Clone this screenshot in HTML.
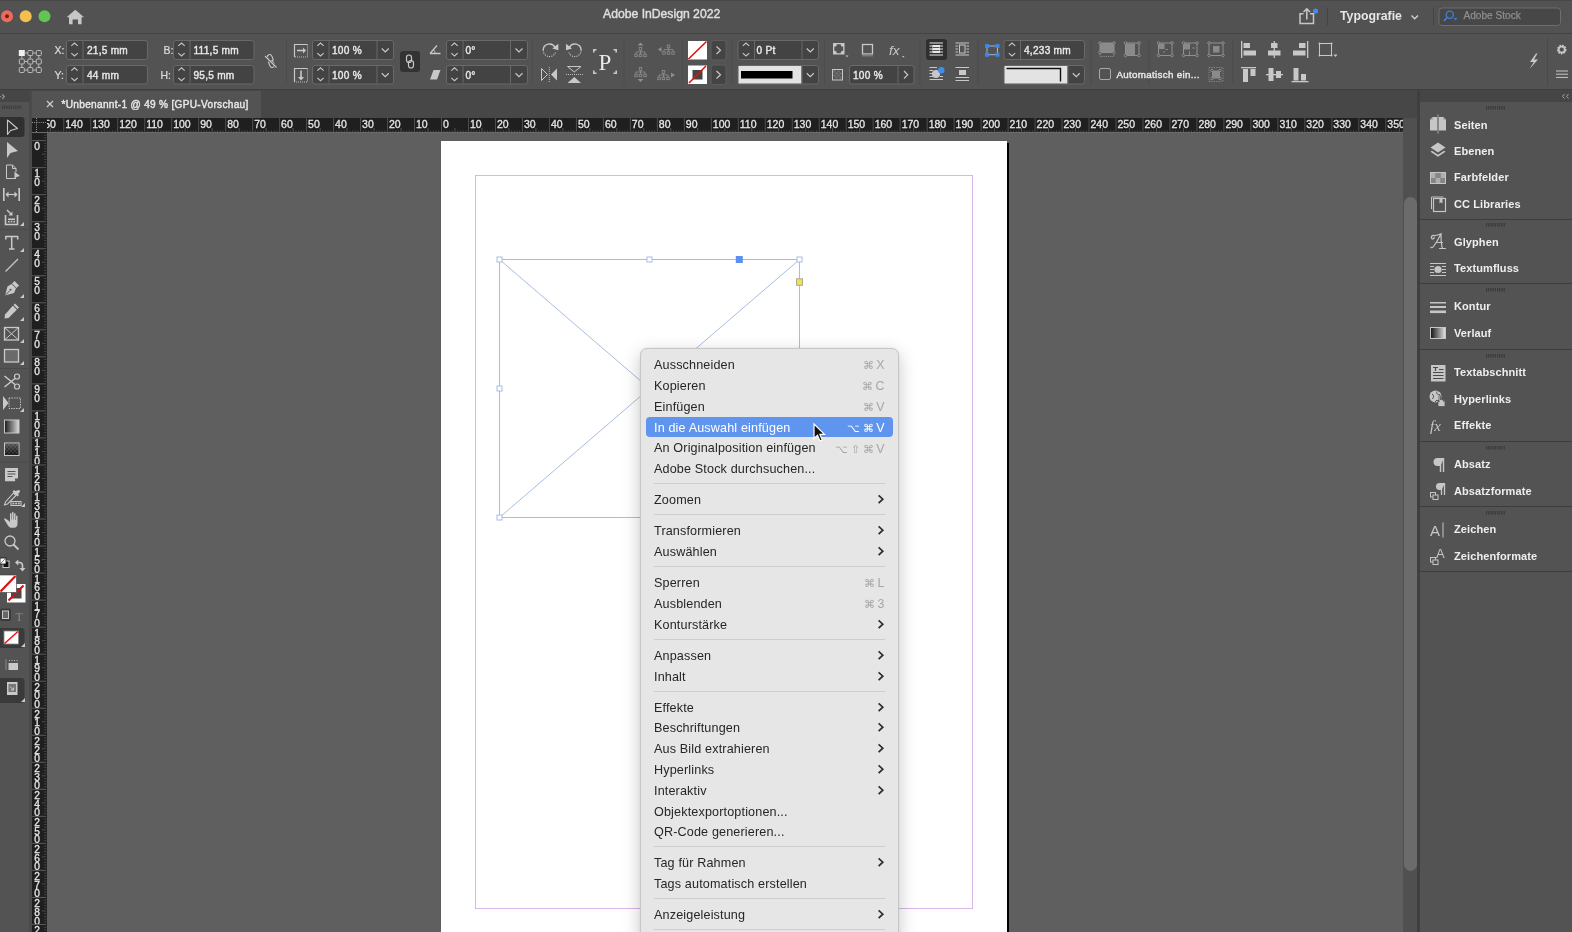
<!DOCTYPE html><html><head><meta charset="utf-8"><style>
*{margin:0;padding:0;box-sizing:border-box}
html,body{width:1572px;height:932px;overflow:hidden;background:#535353;font-family:"Liberation Sans",sans-serif}
body{will-change:transform}
.a{position:absolute}
.t{white-space:pre}
svg{position:absolute;overflow:visible}
</style></head><body><div class="a" style="left:0px;top:0px;width:1572px;height:34px;background:#525252;border-top:1px solid #474747;border-bottom:1px solid #434343"></div><div class="a" style="left:0px;top:34px;width:1572px;height:56px;background:#535353;border-bottom:1px solid #3e3e3e"></div><div class="a" style="left:31px;top:90px;width:1386px;height:28px;background:#474747;"></div><div class="a" style="left:32px;top:91px;width:229px;height:27px;background:#535353;"></div><div class="a" style="left:0px;top:90px;width:32px;height:842px;background:#535353;border-right:3px solid #4a4a4a"></div><div class="a" style="left:0px;top:90px;width:30px;height:12px;background:#464646;"></div><div class="a" style="left:32px;top:118px;width:1371px;height:15px;background:#1f1f1f;"></div><div class="a" style="left:32px;top:132px;width:1371px;height:1px;background:#6a6a6a;"></div><div class="a" style="left:32px;top:133px;width:15px;height:799px;background:#1f1f1f;"></div><div class="a" style="left:47px;top:133px;width:1356px;height:799px;background:#5f5f5f;"></div><div class="a" style="left:1403px;top:118px;width:14px;height:814px;background:#505050;"></div><div class="a" style="left:1404px;top:197px;width:13px;height:674px;background:#6b6b6b;border-radius:7px"></div><div class="a" style="left:1417px;top:90px;width:3px;height:842px;background:#3f3f3f;"></div><div class="a" style="left:1420px;top:90px;width:152px;height:842px;background:#535353;"></div><div class="a" style="left:1420px;top:90px;width:152px;height:12px;background:#454545;"></div><div class="a" style="left:441px;top:141px;width:566px;height:791px;background:#ffffff;"></div><div class="a" style="left:1007px;top:143px;width:2px;height:789px;background:#000000;"></div><div class="a" style="left:475px;top:175px;width:498px;height:734px;background:transparent;border:1px solid #d8b6e8"></div><svg class="a" style="left:0;top:0" width="1572" height="932"><rect x="47.09" y="130.5" width="1" height="1.5" fill="#4c4c4c"/><rect x="49.79" y="128" width="1" height="4" fill="#555"/><rect x="52.49" y="130.5" width="1" height="1.5" fill="#4c4c4c"/><rect x="55.19" y="130.5" width="1" height="1.5" fill="#4c4c4c"/><rect x="57.88" y="130.5" width="1" height="1.5" fill="#4c4c4c"/><rect x="60.58" y="130.5" width="1" height="1.5" fill="#4c4c4c"/><rect x="63.28" y="118" width="1" height="14" fill="#505050"/><rect x="65.98" y="130.5" width="1" height="1.5" fill="#4c4c4c"/><rect x="68.68" y="130.5" width="1" height="1.5" fill="#4c4c4c"/><rect x="71.37" y="130.5" width="1" height="1.5" fill="#4c4c4c"/><rect x="74.07" y="130.5" width="1" height="1.5" fill="#4c4c4c"/><rect x="76.77" y="128" width="1" height="4" fill="#555"/><rect x="79.47" y="130.5" width="1" height="1.5" fill="#4c4c4c"/><rect x="82.17" y="130.5" width="1" height="1.5" fill="#4c4c4c"/><rect x="84.86" y="130.5" width="1" height="1.5" fill="#4c4c4c"/><rect x="87.56" y="130.5" width="1" height="1.5" fill="#4c4c4c"/><rect x="90.26" y="118" width="1" height="14" fill="#505050"/><rect x="92.96" y="130.5" width="1" height="1.5" fill="#4c4c4c"/><rect x="95.66" y="130.5" width="1" height="1.5" fill="#4c4c4c"/><rect x="98.35" y="130.5" width="1" height="1.5" fill="#4c4c4c"/><rect x="101.05" y="130.5" width="1" height="1.5" fill="#4c4c4c"/><rect x="103.75" y="128" width="1" height="4" fill="#555"/><rect x="106.45" y="130.5" width="1" height="1.5" fill="#4c4c4c"/><rect x="109.15" y="130.5" width="1" height="1.5" fill="#4c4c4c"/><rect x="111.84" y="130.5" width="1" height="1.5" fill="#4c4c4c"/><rect x="114.54" y="130.5" width="1" height="1.5" fill="#4c4c4c"/><rect x="117.24" y="118" width="1" height="14" fill="#505050"/><rect x="119.94" y="130.5" width="1" height="1.5" fill="#4c4c4c"/><rect x="122.64" y="130.5" width="1" height="1.5" fill="#4c4c4c"/><rect x="125.33" y="130.5" width="1" height="1.5" fill="#4c4c4c"/><rect x="128.03" y="130.5" width="1" height="1.5" fill="#4c4c4c"/><rect x="130.73" y="128" width="1" height="4" fill="#555"/><rect x="133.43" y="130.5" width="1" height="1.5" fill="#4c4c4c"/><rect x="136.13" y="130.5" width="1" height="1.5" fill="#4c4c4c"/><rect x="138.82" y="130.5" width="1" height="1.5" fill="#4c4c4c"/><rect x="141.52" y="130.5" width="1" height="1.5" fill="#4c4c4c"/><rect x="144.22" y="118" width="1" height="14" fill="#505050"/><rect x="146.92" y="130.5" width="1" height="1.5" fill="#4c4c4c"/><rect x="149.62" y="130.5" width="1" height="1.5" fill="#4c4c4c"/><rect x="152.31" y="130.5" width="1" height="1.5" fill="#4c4c4c"/><rect x="155.01" y="130.5" width="1" height="1.5" fill="#4c4c4c"/><rect x="157.71" y="128" width="1" height="4" fill="#555"/><rect x="160.41" y="130.5" width="1" height="1.5" fill="#4c4c4c"/><rect x="163.11" y="130.5" width="1" height="1.5" fill="#4c4c4c"/><rect x="165.80" y="130.5" width="1" height="1.5" fill="#4c4c4c"/><rect x="168.50" y="130.5" width="1" height="1.5" fill="#4c4c4c"/><rect x="171.20" y="118" width="1" height="14" fill="#505050"/><rect x="173.90" y="130.5" width="1" height="1.5" fill="#4c4c4c"/><rect x="176.60" y="130.5" width="1" height="1.5" fill="#4c4c4c"/><rect x="179.29" y="130.5" width="1" height="1.5" fill="#4c4c4c"/><rect x="181.99" y="130.5" width="1" height="1.5" fill="#4c4c4c"/><rect x="184.69" y="128" width="1" height="4" fill="#555"/><rect x="187.39" y="130.5" width="1" height="1.5" fill="#4c4c4c"/><rect x="190.09" y="130.5" width="1" height="1.5" fill="#4c4c4c"/><rect x="192.78" y="130.5" width="1" height="1.5" fill="#4c4c4c"/><rect x="195.48" y="130.5" width="1" height="1.5" fill="#4c4c4c"/><rect x="198.18" y="118" width="1" height="14" fill="#505050"/><rect x="200.88" y="130.5" width="1" height="1.5" fill="#4c4c4c"/><rect x="203.58" y="130.5" width="1" height="1.5" fill="#4c4c4c"/><rect x="206.27" y="130.5" width="1" height="1.5" fill="#4c4c4c"/><rect x="208.97" y="130.5" width="1" height="1.5" fill="#4c4c4c"/><rect x="211.67" y="128" width="1" height="4" fill="#555"/><rect x="214.37" y="130.5" width="1" height="1.5" fill="#4c4c4c"/><rect x="217.07" y="130.5" width="1" height="1.5" fill="#4c4c4c"/><rect x="219.76" y="130.5" width="1" height="1.5" fill="#4c4c4c"/><rect x="222.46" y="130.5" width="1" height="1.5" fill="#4c4c4c"/><rect x="225.16" y="118" width="1" height="14" fill="#505050"/><rect x="227.86" y="130.5" width="1" height="1.5" fill="#4c4c4c"/><rect x="230.56" y="130.5" width="1" height="1.5" fill="#4c4c4c"/><rect x="233.25" y="130.5" width="1" height="1.5" fill="#4c4c4c"/><rect x="235.95" y="130.5" width="1" height="1.5" fill="#4c4c4c"/><rect x="238.65" y="128" width="1" height="4" fill="#555"/><rect x="241.35" y="130.5" width="1" height="1.5" fill="#4c4c4c"/><rect x="244.05" y="130.5" width="1" height="1.5" fill="#4c4c4c"/><rect x="246.74" y="130.5" width="1" height="1.5" fill="#4c4c4c"/><rect x="249.44" y="130.5" width="1" height="1.5" fill="#4c4c4c"/><rect x="252.14" y="118" width="1" height="14" fill="#505050"/><rect x="254.84" y="130.5" width="1" height="1.5" fill="#4c4c4c"/><rect x="257.54" y="130.5" width="1" height="1.5" fill="#4c4c4c"/><rect x="260.23" y="130.5" width="1" height="1.5" fill="#4c4c4c"/><rect x="262.93" y="130.5" width="1" height="1.5" fill="#4c4c4c"/><rect x="265.63" y="128" width="1" height="4" fill="#555"/><rect x="268.33" y="130.5" width="1" height="1.5" fill="#4c4c4c"/><rect x="271.03" y="130.5" width="1" height="1.5" fill="#4c4c4c"/><rect x="273.72" y="130.5" width="1" height="1.5" fill="#4c4c4c"/><rect x="276.42" y="130.5" width="1" height="1.5" fill="#4c4c4c"/><rect x="279.12" y="118" width="1" height="14" fill="#505050"/><rect x="281.82" y="130.5" width="1" height="1.5" fill="#4c4c4c"/><rect x="284.52" y="130.5" width="1" height="1.5" fill="#4c4c4c"/><rect x="287.21" y="130.5" width="1" height="1.5" fill="#4c4c4c"/><rect x="289.91" y="130.5" width="1" height="1.5" fill="#4c4c4c"/><rect x="292.61" y="128" width="1" height="4" fill="#555"/><rect x="295.31" y="130.5" width="1" height="1.5" fill="#4c4c4c"/><rect x="298.01" y="130.5" width="1" height="1.5" fill="#4c4c4c"/><rect x="300.70" y="130.5" width="1" height="1.5" fill="#4c4c4c"/><rect x="303.40" y="130.5" width="1" height="1.5" fill="#4c4c4c"/><rect x="306.10" y="118" width="1" height="14" fill="#505050"/><rect x="308.80" y="130.5" width="1" height="1.5" fill="#4c4c4c"/><rect x="311.50" y="130.5" width="1" height="1.5" fill="#4c4c4c"/><rect x="314.19" y="130.5" width="1" height="1.5" fill="#4c4c4c"/><rect x="316.89" y="130.5" width="1" height="1.5" fill="#4c4c4c"/><rect x="319.59" y="128" width="1" height="4" fill="#555"/><rect x="322.29" y="130.5" width="1" height="1.5" fill="#4c4c4c"/><rect x="324.99" y="130.5" width="1" height="1.5" fill="#4c4c4c"/><rect x="327.68" y="130.5" width="1" height="1.5" fill="#4c4c4c"/><rect x="330.38" y="130.5" width="1" height="1.5" fill="#4c4c4c"/><rect x="333.08" y="118" width="1" height="14" fill="#505050"/><rect x="335.78" y="130.5" width="1" height="1.5" fill="#4c4c4c"/><rect x="338.48" y="130.5" width="1" height="1.5" fill="#4c4c4c"/><rect x="341.17" y="130.5" width="1" height="1.5" fill="#4c4c4c"/><rect x="343.87" y="130.5" width="1" height="1.5" fill="#4c4c4c"/><rect x="346.57" y="128" width="1" height="4" fill="#555"/><rect x="349.27" y="130.5" width="1" height="1.5" fill="#4c4c4c"/><rect x="351.97" y="130.5" width="1" height="1.5" fill="#4c4c4c"/><rect x="354.66" y="130.5" width="1" height="1.5" fill="#4c4c4c"/><rect x="357.36" y="130.5" width="1" height="1.5" fill="#4c4c4c"/><rect x="360.06" y="118" width="1" height="14" fill="#505050"/><rect x="362.76" y="130.5" width="1" height="1.5" fill="#4c4c4c"/><rect x="365.46" y="130.5" width="1" height="1.5" fill="#4c4c4c"/><rect x="368.15" y="130.5" width="1" height="1.5" fill="#4c4c4c"/><rect x="370.85" y="130.5" width="1" height="1.5" fill="#4c4c4c"/><rect x="373.55" y="128" width="1" height="4" fill="#555"/><rect x="376.25" y="130.5" width="1" height="1.5" fill="#4c4c4c"/><rect x="378.95" y="130.5" width="1" height="1.5" fill="#4c4c4c"/><rect x="381.64" y="130.5" width="1" height="1.5" fill="#4c4c4c"/><rect x="384.34" y="130.5" width="1" height="1.5" fill="#4c4c4c"/><rect x="387.04" y="118" width="1" height="14" fill="#505050"/><rect x="389.74" y="130.5" width="1" height="1.5" fill="#4c4c4c"/><rect x="392.44" y="130.5" width="1" height="1.5" fill="#4c4c4c"/><rect x="395.13" y="130.5" width="1" height="1.5" fill="#4c4c4c"/><rect x="397.83" y="130.5" width="1" height="1.5" fill="#4c4c4c"/><rect x="400.53" y="128" width="1" height="4" fill="#555"/><rect x="403.23" y="130.5" width="1" height="1.5" fill="#4c4c4c"/><rect x="405.93" y="130.5" width="1" height="1.5" fill="#4c4c4c"/><rect x="408.62" y="130.5" width="1" height="1.5" fill="#4c4c4c"/><rect x="411.32" y="130.5" width="1" height="1.5" fill="#4c4c4c"/><rect x="414.02" y="118" width="1" height="14" fill="#505050"/><rect x="416.72" y="130.5" width="1" height="1.5" fill="#4c4c4c"/><rect x="419.42" y="130.5" width="1" height="1.5" fill="#4c4c4c"/><rect x="422.11" y="130.5" width="1" height="1.5" fill="#4c4c4c"/><rect x="424.81" y="130.5" width="1" height="1.5" fill="#4c4c4c"/><rect x="427.51" y="128" width="1" height="4" fill="#555"/><rect x="430.21" y="130.5" width="1" height="1.5" fill="#4c4c4c"/><rect x="432.91" y="130.5" width="1" height="1.5" fill="#4c4c4c"/><rect x="435.60" y="130.5" width="1" height="1.5" fill="#4c4c4c"/><rect x="438.30" y="130.5" width="1" height="1.5" fill="#4c4c4c"/><rect x="441.00" y="118" width="1" height="14" fill="#505050"/><rect x="443.70" y="130.5" width="1" height="1.5" fill="#4c4c4c"/><rect x="446.40" y="130.5" width="1" height="1.5" fill="#4c4c4c"/><rect x="449.09" y="130.5" width="1" height="1.5" fill="#4c4c4c"/><rect x="451.79" y="130.5" width="1" height="1.5" fill="#4c4c4c"/><rect x="454.49" y="128" width="1" height="4" fill="#555"/><rect x="457.19" y="130.5" width="1" height="1.5" fill="#4c4c4c"/><rect x="459.89" y="130.5" width="1" height="1.5" fill="#4c4c4c"/><rect x="462.58" y="130.5" width="1" height="1.5" fill="#4c4c4c"/><rect x="465.28" y="130.5" width="1" height="1.5" fill="#4c4c4c"/><rect x="467.98" y="118" width="1" height="14" fill="#505050"/><rect x="470.68" y="130.5" width="1" height="1.5" fill="#4c4c4c"/><rect x="473.38" y="130.5" width="1" height="1.5" fill="#4c4c4c"/><rect x="476.07" y="130.5" width="1" height="1.5" fill="#4c4c4c"/><rect x="478.77" y="130.5" width="1" height="1.5" fill="#4c4c4c"/><rect x="481.47" y="128" width="1" height="4" fill="#555"/><rect x="484.17" y="130.5" width="1" height="1.5" fill="#4c4c4c"/><rect x="486.87" y="130.5" width="1" height="1.5" fill="#4c4c4c"/><rect x="489.56" y="130.5" width="1" height="1.5" fill="#4c4c4c"/><rect x="492.26" y="130.5" width="1" height="1.5" fill="#4c4c4c"/><rect x="494.96" y="118" width="1" height="14" fill="#505050"/><rect x="497.66" y="130.5" width="1" height="1.5" fill="#4c4c4c"/><rect x="500.36" y="130.5" width="1" height="1.5" fill="#4c4c4c"/><rect x="503.05" y="130.5" width="1" height="1.5" fill="#4c4c4c"/><rect x="505.75" y="130.5" width="1" height="1.5" fill="#4c4c4c"/><rect x="508.45" y="128" width="1" height="4" fill="#555"/><rect x="511.15" y="130.5" width="1" height="1.5" fill="#4c4c4c"/><rect x="513.85" y="130.5" width="1" height="1.5" fill="#4c4c4c"/><rect x="516.54" y="130.5" width="1" height="1.5" fill="#4c4c4c"/><rect x="519.24" y="130.5" width="1" height="1.5" fill="#4c4c4c"/><rect x="521.94" y="118" width="1" height="14" fill="#505050"/><rect x="524.64" y="130.5" width="1" height="1.5" fill="#4c4c4c"/><rect x="527.34" y="130.5" width="1" height="1.5" fill="#4c4c4c"/><rect x="530.03" y="130.5" width="1" height="1.5" fill="#4c4c4c"/><rect x="532.73" y="130.5" width="1" height="1.5" fill="#4c4c4c"/><rect x="535.43" y="128" width="1" height="4" fill="#555"/><rect x="538.13" y="130.5" width="1" height="1.5" fill="#4c4c4c"/><rect x="540.83" y="130.5" width="1" height="1.5" fill="#4c4c4c"/><rect x="543.52" y="130.5" width="1" height="1.5" fill="#4c4c4c"/><rect x="546.22" y="130.5" width="1" height="1.5" fill="#4c4c4c"/><rect x="548.92" y="118" width="1" height="14" fill="#505050"/><rect x="551.62" y="130.5" width="1" height="1.5" fill="#4c4c4c"/><rect x="554.32" y="130.5" width="1" height="1.5" fill="#4c4c4c"/><rect x="557.01" y="130.5" width="1" height="1.5" fill="#4c4c4c"/><rect x="559.71" y="130.5" width="1" height="1.5" fill="#4c4c4c"/><rect x="562.41" y="128" width="1" height="4" fill="#555"/><rect x="565.11" y="130.5" width="1" height="1.5" fill="#4c4c4c"/><rect x="567.81" y="130.5" width="1" height="1.5" fill="#4c4c4c"/><rect x="570.50" y="130.5" width="1" height="1.5" fill="#4c4c4c"/><rect x="573.20" y="130.5" width="1" height="1.5" fill="#4c4c4c"/><rect x="575.90" y="118" width="1" height="14" fill="#505050"/><rect x="578.60" y="130.5" width="1" height="1.5" fill="#4c4c4c"/><rect x="581.30" y="130.5" width="1" height="1.5" fill="#4c4c4c"/><rect x="583.99" y="130.5" width="1" height="1.5" fill="#4c4c4c"/><rect x="586.69" y="130.5" width="1" height="1.5" fill="#4c4c4c"/><rect x="589.39" y="128" width="1" height="4" fill="#555"/><rect x="592.09" y="130.5" width="1" height="1.5" fill="#4c4c4c"/><rect x="594.79" y="130.5" width="1" height="1.5" fill="#4c4c4c"/><rect x="597.48" y="130.5" width="1" height="1.5" fill="#4c4c4c"/><rect x="600.18" y="130.5" width="1" height="1.5" fill="#4c4c4c"/><rect x="602.88" y="118" width="1" height="14" fill="#505050"/><rect x="605.58" y="130.5" width="1" height="1.5" fill="#4c4c4c"/><rect x="608.28" y="130.5" width="1" height="1.5" fill="#4c4c4c"/><rect x="610.97" y="130.5" width="1" height="1.5" fill="#4c4c4c"/><rect x="613.67" y="130.5" width="1" height="1.5" fill="#4c4c4c"/><rect x="616.37" y="128" width="1" height="4" fill="#555"/><rect x="619.07" y="130.5" width="1" height="1.5" fill="#4c4c4c"/><rect x="621.77" y="130.5" width="1" height="1.5" fill="#4c4c4c"/><rect x="624.46" y="130.5" width="1" height="1.5" fill="#4c4c4c"/><rect x="627.16" y="130.5" width="1" height="1.5" fill="#4c4c4c"/><rect x="629.86" y="118" width="1" height="14" fill="#505050"/><rect x="632.56" y="130.5" width="1" height="1.5" fill="#4c4c4c"/><rect x="635.26" y="130.5" width="1" height="1.5" fill="#4c4c4c"/><rect x="637.95" y="130.5" width="1" height="1.5" fill="#4c4c4c"/><rect x="640.65" y="130.5" width="1" height="1.5" fill="#4c4c4c"/><rect x="643.35" y="128" width="1" height="4" fill="#555"/><rect x="646.05" y="130.5" width="1" height="1.5" fill="#4c4c4c"/><rect x="648.75" y="130.5" width="1" height="1.5" fill="#4c4c4c"/><rect x="651.44" y="130.5" width="1" height="1.5" fill="#4c4c4c"/><rect x="654.14" y="130.5" width="1" height="1.5" fill="#4c4c4c"/><rect x="656.84" y="118" width="1" height="14" fill="#505050"/><rect x="659.54" y="130.5" width="1" height="1.5" fill="#4c4c4c"/><rect x="662.24" y="130.5" width="1" height="1.5" fill="#4c4c4c"/><rect x="664.93" y="130.5" width="1" height="1.5" fill="#4c4c4c"/><rect x="667.63" y="130.5" width="1" height="1.5" fill="#4c4c4c"/><rect x="670.33" y="128" width="1" height="4" fill="#555"/><rect x="673.03" y="130.5" width="1" height="1.5" fill="#4c4c4c"/><rect x="675.73" y="130.5" width="1" height="1.5" fill="#4c4c4c"/><rect x="678.42" y="130.5" width="1" height="1.5" fill="#4c4c4c"/><rect x="681.12" y="130.5" width="1" height="1.5" fill="#4c4c4c"/><rect x="683.82" y="118" width="1" height="14" fill="#505050"/><rect x="686.52" y="130.5" width="1" height="1.5" fill="#4c4c4c"/><rect x="689.22" y="130.5" width="1" height="1.5" fill="#4c4c4c"/><rect x="691.91" y="130.5" width="1" height="1.5" fill="#4c4c4c"/><rect x="694.61" y="130.5" width="1" height="1.5" fill="#4c4c4c"/><rect x="697.31" y="128" width="1" height="4" fill="#555"/><rect x="700.01" y="130.5" width="1" height="1.5" fill="#4c4c4c"/><rect x="702.71" y="130.5" width="1" height="1.5" fill="#4c4c4c"/><rect x="705.40" y="130.5" width="1" height="1.5" fill="#4c4c4c"/><rect x="708.10" y="130.5" width="1" height="1.5" fill="#4c4c4c"/><rect x="710.80" y="118" width="1" height="14" fill="#505050"/><rect x="713.50" y="130.5" width="1" height="1.5" fill="#4c4c4c"/><rect x="716.20" y="130.5" width="1" height="1.5" fill="#4c4c4c"/><rect x="718.89" y="130.5" width="1" height="1.5" fill="#4c4c4c"/><rect x="721.59" y="130.5" width="1" height="1.5" fill="#4c4c4c"/><rect x="724.29" y="128" width="1" height="4" fill="#555"/><rect x="726.99" y="130.5" width="1" height="1.5" fill="#4c4c4c"/><rect x="729.69" y="130.5" width="1" height="1.5" fill="#4c4c4c"/><rect x="732.38" y="130.5" width="1" height="1.5" fill="#4c4c4c"/><rect x="735.08" y="130.5" width="1" height="1.5" fill="#4c4c4c"/><rect x="737.78" y="118" width="1" height="14" fill="#505050"/><rect x="740.48" y="130.5" width="1" height="1.5" fill="#4c4c4c"/><rect x="743.18" y="130.5" width="1" height="1.5" fill="#4c4c4c"/><rect x="745.87" y="130.5" width="1" height="1.5" fill="#4c4c4c"/><rect x="748.57" y="130.5" width="1" height="1.5" fill="#4c4c4c"/><rect x="751.27" y="128" width="1" height="4" fill="#555"/><rect x="753.97" y="130.5" width="1" height="1.5" fill="#4c4c4c"/><rect x="756.67" y="130.5" width="1" height="1.5" fill="#4c4c4c"/><rect x="759.36" y="130.5" width="1" height="1.5" fill="#4c4c4c"/><rect x="762.06" y="130.5" width="1" height="1.5" fill="#4c4c4c"/><rect x="764.76" y="118" width="1" height="14" fill="#505050"/><rect x="767.46" y="130.5" width="1" height="1.5" fill="#4c4c4c"/><rect x="770.16" y="130.5" width="1" height="1.5" fill="#4c4c4c"/><rect x="772.85" y="130.5" width="1" height="1.5" fill="#4c4c4c"/><rect x="775.55" y="130.5" width="1" height="1.5" fill="#4c4c4c"/><rect x="778.25" y="128" width="1" height="4" fill="#555"/><rect x="780.95" y="130.5" width="1" height="1.5" fill="#4c4c4c"/><rect x="783.65" y="130.5" width="1" height="1.5" fill="#4c4c4c"/><rect x="786.34" y="130.5" width="1" height="1.5" fill="#4c4c4c"/><rect x="789.04" y="130.5" width="1" height="1.5" fill="#4c4c4c"/><rect x="791.74" y="118" width="1" height="14" fill="#505050"/><rect x="794.44" y="130.5" width="1" height="1.5" fill="#4c4c4c"/><rect x="797.14" y="130.5" width="1" height="1.5" fill="#4c4c4c"/><rect x="799.83" y="130.5" width="1" height="1.5" fill="#4c4c4c"/><rect x="802.53" y="130.5" width="1" height="1.5" fill="#4c4c4c"/><rect x="805.23" y="128" width="1" height="4" fill="#555"/><rect x="807.93" y="130.5" width="1" height="1.5" fill="#4c4c4c"/><rect x="810.63" y="130.5" width="1" height="1.5" fill="#4c4c4c"/><rect x="813.32" y="130.5" width="1" height="1.5" fill="#4c4c4c"/><rect x="816.02" y="130.5" width="1" height="1.5" fill="#4c4c4c"/><rect x="818.72" y="118" width="1" height="14" fill="#505050"/><rect x="821.42" y="130.5" width="1" height="1.5" fill="#4c4c4c"/><rect x="824.12" y="130.5" width="1" height="1.5" fill="#4c4c4c"/><rect x="826.81" y="130.5" width="1" height="1.5" fill="#4c4c4c"/><rect x="829.51" y="130.5" width="1" height="1.5" fill="#4c4c4c"/><rect x="832.21" y="128" width="1" height="4" fill="#555"/><rect x="834.91" y="130.5" width="1" height="1.5" fill="#4c4c4c"/><rect x="837.61" y="130.5" width="1" height="1.5" fill="#4c4c4c"/><rect x="840.30" y="130.5" width="1" height="1.5" fill="#4c4c4c"/><rect x="843.00" y="130.5" width="1" height="1.5" fill="#4c4c4c"/><rect x="845.70" y="118" width="1" height="14" fill="#505050"/><rect x="848.40" y="130.5" width="1" height="1.5" fill="#4c4c4c"/><rect x="851.10" y="130.5" width="1" height="1.5" fill="#4c4c4c"/><rect x="853.79" y="130.5" width="1" height="1.5" fill="#4c4c4c"/><rect x="856.49" y="130.5" width="1" height="1.5" fill="#4c4c4c"/><rect x="859.19" y="128" width="1" height="4" fill="#555"/><rect x="861.89" y="130.5" width="1" height="1.5" fill="#4c4c4c"/><rect x="864.59" y="130.5" width="1" height="1.5" fill="#4c4c4c"/><rect x="867.28" y="130.5" width="1" height="1.5" fill="#4c4c4c"/><rect x="869.98" y="130.5" width="1" height="1.5" fill="#4c4c4c"/><rect x="872.68" y="118" width="1" height="14" fill="#505050"/><rect x="875.38" y="130.5" width="1" height="1.5" fill="#4c4c4c"/><rect x="878.08" y="130.5" width="1" height="1.5" fill="#4c4c4c"/><rect x="880.77" y="130.5" width="1" height="1.5" fill="#4c4c4c"/><rect x="883.47" y="130.5" width="1" height="1.5" fill="#4c4c4c"/><rect x="886.17" y="128" width="1" height="4" fill="#555"/><rect x="888.87" y="130.5" width="1" height="1.5" fill="#4c4c4c"/><rect x="891.57" y="130.5" width="1" height="1.5" fill="#4c4c4c"/><rect x="894.26" y="130.5" width="1" height="1.5" fill="#4c4c4c"/><rect x="896.96" y="130.5" width="1" height="1.5" fill="#4c4c4c"/><rect x="899.66" y="118" width="1" height="14" fill="#505050"/><rect x="902.36" y="130.5" width="1" height="1.5" fill="#4c4c4c"/><rect x="905.06" y="130.5" width="1" height="1.5" fill="#4c4c4c"/><rect x="907.75" y="130.5" width="1" height="1.5" fill="#4c4c4c"/><rect x="910.45" y="130.5" width="1" height="1.5" fill="#4c4c4c"/><rect x="913.15" y="128" width="1" height="4" fill="#555"/><rect x="915.85" y="130.5" width="1" height="1.5" fill="#4c4c4c"/><rect x="918.55" y="130.5" width="1" height="1.5" fill="#4c4c4c"/><rect x="921.24" y="130.5" width="1" height="1.5" fill="#4c4c4c"/><rect x="923.94" y="130.5" width="1" height="1.5" fill="#4c4c4c"/><rect x="926.64" y="118" width="1" height="14" fill="#505050"/><rect x="929.34" y="130.5" width="1" height="1.5" fill="#4c4c4c"/><rect x="932.04" y="130.5" width="1" height="1.5" fill="#4c4c4c"/><rect x="934.73" y="130.5" width="1" height="1.5" fill="#4c4c4c"/><rect x="937.43" y="130.5" width="1" height="1.5" fill="#4c4c4c"/><rect x="940.13" y="128" width="1" height="4" fill="#555"/><rect x="942.83" y="130.5" width="1" height="1.5" fill="#4c4c4c"/><rect x="945.53" y="130.5" width="1" height="1.5" fill="#4c4c4c"/><rect x="948.22" y="130.5" width="1" height="1.5" fill="#4c4c4c"/><rect x="950.92" y="130.5" width="1" height="1.5" fill="#4c4c4c"/><rect x="953.62" y="118" width="1" height="14" fill="#505050"/><rect x="956.32" y="130.5" width="1" height="1.5" fill="#4c4c4c"/><rect x="959.02" y="130.5" width="1" height="1.5" fill="#4c4c4c"/><rect x="961.71" y="130.5" width="1" height="1.5" fill="#4c4c4c"/><rect x="964.41" y="130.5" width="1" height="1.5" fill="#4c4c4c"/><rect x="967.11" y="128" width="1" height="4" fill="#555"/><rect x="969.81" y="130.5" width="1" height="1.5" fill="#4c4c4c"/><rect x="972.51" y="130.5" width="1" height="1.5" fill="#4c4c4c"/><rect x="975.20" y="130.5" width="1" height="1.5" fill="#4c4c4c"/><rect x="977.90" y="130.5" width="1" height="1.5" fill="#4c4c4c"/><rect x="980.60" y="118" width="1" height="14" fill="#505050"/><rect x="983.30" y="130.5" width="1" height="1.5" fill="#4c4c4c"/><rect x="986.00" y="130.5" width="1" height="1.5" fill="#4c4c4c"/><rect x="988.69" y="130.5" width="1" height="1.5" fill="#4c4c4c"/><rect x="991.39" y="130.5" width="1" height="1.5" fill="#4c4c4c"/><rect x="994.09" y="128" width="1" height="4" fill="#555"/><rect x="996.79" y="130.5" width="1" height="1.5" fill="#4c4c4c"/><rect x="999.49" y="130.5" width="1" height="1.5" fill="#4c4c4c"/><rect x="1002.18" y="130.5" width="1" height="1.5" fill="#4c4c4c"/><rect x="1004.88" y="130.5" width="1" height="1.5" fill="#4c4c4c"/><rect x="1007.58" y="118" width="1" height="14" fill="#505050"/><rect x="1010.28" y="130.5" width="1" height="1.5" fill="#4c4c4c"/><rect x="1012.98" y="130.5" width="1" height="1.5" fill="#4c4c4c"/><rect x="1015.67" y="130.5" width="1" height="1.5" fill="#4c4c4c"/><rect x="1018.37" y="130.5" width="1" height="1.5" fill="#4c4c4c"/><rect x="1021.07" y="128" width="1" height="4" fill="#555"/><rect x="1023.77" y="130.5" width="1" height="1.5" fill="#4c4c4c"/><rect x="1026.47" y="130.5" width="1" height="1.5" fill="#4c4c4c"/><rect x="1029.16" y="130.5" width="1" height="1.5" fill="#4c4c4c"/><rect x="1031.86" y="130.5" width="1" height="1.5" fill="#4c4c4c"/><rect x="1034.56" y="118" width="1" height="14" fill="#505050"/><rect x="1037.26" y="130.5" width="1" height="1.5" fill="#4c4c4c"/><rect x="1039.96" y="130.5" width="1" height="1.5" fill="#4c4c4c"/><rect x="1042.65" y="130.5" width="1" height="1.5" fill="#4c4c4c"/><rect x="1045.35" y="130.5" width="1" height="1.5" fill="#4c4c4c"/><rect x="1048.05" y="128" width="1" height="4" fill="#555"/><rect x="1050.75" y="130.5" width="1" height="1.5" fill="#4c4c4c"/><rect x="1053.45" y="130.5" width="1" height="1.5" fill="#4c4c4c"/><rect x="1056.14" y="130.5" width="1" height="1.5" fill="#4c4c4c"/><rect x="1058.84" y="130.5" width="1" height="1.5" fill="#4c4c4c"/><rect x="1061.54" y="118" width="1" height="14" fill="#505050"/><rect x="1064.24" y="130.5" width="1" height="1.5" fill="#4c4c4c"/><rect x="1066.94" y="130.5" width="1" height="1.5" fill="#4c4c4c"/><rect x="1069.63" y="130.5" width="1" height="1.5" fill="#4c4c4c"/><rect x="1072.33" y="130.5" width="1" height="1.5" fill="#4c4c4c"/><rect x="1075.03" y="128" width="1" height="4" fill="#555"/><rect x="1077.73" y="130.5" width="1" height="1.5" fill="#4c4c4c"/><rect x="1080.43" y="130.5" width="1" height="1.5" fill="#4c4c4c"/><rect x="1083.12" y="130.5" width="1" height="1.5" fill="#4c4c4c"/><rect x="1085.82" y="130.5" width="1" height="1.5" fill="#4c4c4c"/><rect x="1088.52" y="118" width="1" height="14" fill="#505050"/><rect x="1091.22" y="130.5" width="1" height="1.5" fill="#4c4c4c"/><rect x="1093.92" y="130.5" width="1" height="1.5" fill="#4c4c4c"/><rect x="1096.61" y="130.5" width="1" height="1.5" fill="#4c4c4c"/><rect x="1099.31" y="130.5" width="1" height="1.5" fill="#4c4c4c"/><rect x="1102.01" y="128" width="1" height="4" fill="#555"/><rect x="1104.71" y="130.5" width="1" height="1.5" fill="#4c4c4c"/><rect x="1107.41" y="130.5" width="1" height="1.5" fill="#4c4c4c"/><rect x="1110.10" y="130.5" width="1" height="1.5" fill="#4c4c4c"/><rect x="1112.80" y="130.5" width="1" height="1.5" fill="#4c4c4c"/><rect x="1115.50" y="118" width="1" height="14" fill="#505050"/><rect x="1118.20" y="130.5" width="1" height="1.5" fill="#4c4c4c"/><rect x="1120.90" y="130.5" width="1" height="1.5" fill="#4c4c4c"/><rect x="1123.59" y="130.5" width="1" height="1.5" fill="#4c4c4c"/><rect x="1126.29" y="130.5" width="1" height="1.5" fill="#4c4c4c"/><rect x="1128.99" y="128" width="1" height="4" fill="#555"/><rect x="1131.69" y="130.5" width="1" height="1.5" fill="#4c4c4c"/><rect x="1134.39" y="130.5" width="1" height="1.5" fill="#4c4c4c"/><rect x="1137.08" y="130.5" width="1" height="1.5" fill="#4c4c4c"/><rect x="1139.78" y="130.5" width="1" height="1.5" fill="#4c4c4c"/><rect x="1142.48" y="118" width="1" height="14" fill="#505050"/><rect x="1145.18" y="130.5" width="1" height="1.5" fill="#4c4c4c"/><rect x="1147.88" y="130.5" width="1" height="1.5" fill="#4c4c4c"/><rect x="1150.57" y="130.5" width="1" height="1.5" fill="#4c4c4c"/><rect x="1153.27" y="130.5" width="1" height="1.5" fill="#4c4c4c"/><rect x="1155.97" y="128" width="1" height="4" fill="#555"/><rect x="1158.67" y="130.5" width="1" height="1.5" fill="#4c4c4c"/><rect x="1161.37" y="130.5" width="1" height="1.5" fill="#4c4c4c"/><rect x="1164.06" y="130.5" width="1" height="1.5" fill="#4c4c4c"/><rect x="1166.76" y="130.5" width="1" height="1.5" fill="#4c4c4c"/><rect x="1169.46" y="118" width="1" height="14" fill="#505050"/><rect x="1172.16" y="130.5" width="1" height="1.5" fill="#4c4c4c"/><rect x="1174.86" y="130.5" width="1" height="1.5" fill="#4c4c4c"/><rect x="1177.55" y="130.5" width="1" height="1.5" fill="#4c4c4c"/><rect x="1180.25" y="130.5" width="1" height="1.5" fill="#4c4c4c"/><rect x="1182.95" y="128" width="1" height="4" fill="#555"/><rect x="1185.65" y="130.5" width="1" height="1.5" fill="#4c4c4c"/><rect x="1188.35" y="130.5" width="1" height="1.5" fill="#4c4c4c"/><rect x="1191.04" y="130.5" width="1" height="1.5" fill="#4c4c4c"/><rect x="1193.74" y="130.5" width="1" height="1.5" fill="#4c4c4c"/><rect x="1196.44" y="118" width="1" height="14" fill="#505050"/><rect x="1199.14" y="130.5" width="1" height="1.5" fill="#4c4c4c"/><rect x="1201.84" y="130.5" width="1" height="1.5" fill="#4c4c4c"/><rect x="1204.53" y="130.5" width="1" height="1.5" fill="#4c4c4c"/><rect x="1207.23" y="130.5" width="1" height="1.5" fill="#4c4c4c"/><rect x="1209.93" y="128" width="1" height="4" fill="#555"/><rect x="1212.63" y="130.5" width="1" height="1.5" fill="#4c4c4c"/><rect x="1215.33" y="130.5" width="1" height="1.5" fill="#4c4c4c"/><rect x="1218.02" y="130.5" width="1" height="1.5" fill="#4c4c4c"/><rect x="1220.72" y="130.5" width="1" height="1.5" fill="#4c4c4c"/><rect x="1223.42" y="118" width="1" height="14" fill="#505050"/><rect x="1226.12" y="130.5" width="1" height="1.5" fill="#4c4c4c"/><rect x="1228.82" y="130.5" width="1" height="1.5" fill="#4c4c4c"/><rect x="1231.51" y="130.5" width="1" height="1.5" fill="#4c4c4c"/><rect x="1234.21" y="130.5" width="1" height="1.5" fill="#4c4c4c"/><rect x="1236.91" y="128" width="1" height="4" fill="#555"/><rect x="1239.61" y="130.5" width="1" height="1.5" fill="#4c4c4c"/><rect x="1242.31" y="130.5" width="1" height="1.5" fill="#4c4c4c"/><rect x="1245.00" y="130.5" width="1" height="1.5" fill="#4c4c4c"/><rect x="1247.70" y="130.5" width="1" height="1.5" fill="#4c4c4c"/><rect x="1250.40" y="118" width="1" height="14" fill="#505050"/><rect x="1253.10" y="130.5" width="1" height="1.5" fill="#4c4c4c"/><rect x="1255.80" y="130.5" width="1" height="1.5" fill="#4c4c4c"/><rect x="1258.49" y="130.5" width="1" height="1.5" fill="#4c4c4c"/><rect x="1261.19" y="130.5" width="1" height="1.5" fill="#4c4c4c"/><rect x="1263.89" y="128" width="1" height="4" fill="#555"/><rect x="1266.59" y="130.5" width="1" height="1.5" fill="#4c4c4c"/><rect x="1269.29" y="130.5" width="1" height="1.5" fill="#4c4c4c"/><rect x="1271.98" y="130.5" width="1" height="1.5" fill="#4c4c4c"/><rect x="1274.68" y="130.5" width="1" height="1.5" fill="#4c4c4c"/><rect x="1277.38" y="118" width="1" height="14" fill="#505050"/><rect x="1280.08" y="130.5" width="1" height="1.5" fill="#4c4c4c"/><rect x="1282.78" y="130.5" width="1" height="1.5" fill="#4c4c4c"/><rect x="1285.47" y="130.5" width="1" height="1.5" fill="#4c4c4c"/><rect x="1288.17" y="130.5" width="1" height="1.5" fill="#4c4c4c"/><rect x="1290.87" y="128" width="1" height="4" fill="#555"/><rect x="1293.57" y="130.5" width="1" height="1.5" fill="#4c4c4c"/><rect x="1296.27" y="130.5" width="1" height="1.5" fill="#4c4c4c"/><rect x="1298.96" y="130.5" width="1" height="1.5" fill="#4c4c4c"/><rect x="1301.66" y="130.5" width="1" height="1.5" fill="#4c4c4c"/><rect x="1304.36" y="118" width="1" height="14" fill="#505050"/><rect x="1307.06" y="130.5" width="1" height="1.5" fill="#4c4c4c"/><rect x="1309.76" y="130.5" width="1" height="1.5" fill="#4c4c4c"/><rect x="1312.45" y="130.5" width="1" height="1.5" fill="#4c4c4c"/><rect x="1315.15" y="130.5" width="1" height="1.5" fill="#4c4c4c"/><rect x="1317.85" y="128" width="1" height="4" fill="#555"/><rect x="1320.55" y="130.5" width="1" height="1.5" fill="#4c4c4c"/><rect x="1323.25" y="130.5" width="1" height="1.5" fill="#4c4c4c"/><rect x="1325.94" y="130.5" width="1" height="1.5" fill="#4c4c4c"/><rect x="1328.64" y="130.5" width="1" height="1.5" fill="#4c4c4c"/><rect x="1331.34" y="118" width="1" height="14" fill="#505050"/><rect x="1334.04" y="130.5" width="1" height="1.5" fill="#4c4c4c"/><rect x="1336.74" y="130.5" width="1" height="1.5" fill="#4c4c4c"/><rect x="1339.43" y="130.5" width="1" height="1.5" fill="#4c4c4c"/><rect x="1342.13" y="130.5" width="1" height="1.5" fill="#4c4c4c"/><rect x="1344.83" y="128" width="1" height="4" fill="#555"/><rect x="1347.53" y="130.5" width="1" height="1.5" fill="#4c4c4c"/><rect x="1350.23" y="130.5" width="1" height="1.5" fill="#4c4c4c"/><rect x="1352.92" y="130.5" width="1" height="1.5" fill="#4c4c4c"/><rect x="1355.62" y="130.5" width="1" height="1.5" fill="#4c4c4c"/><rect x="1358.32" y="118" width="1" height="14" fill="#505050"/><rect x="1361.02" y="130.5" width="1" height="1.5" fill="#4c4c4c"/><rect x="1363.72" y="130.5" width="1" height="1.5" fill="#4c4c4c"/><rect x="1366.41" y="130.5" width="1" height="1.5" fill="#4c4c4c"/><rect x="1369.11" y="130.5" width="1" height="1.5" fill="#4c4c4c"/><rect x="1371.81" y="128" width="1" height="4" fill="#555"/><rect x="1374.51" y="130.5" width="1" height="1.5" fill="#4c4c4c"/><rect x="1377.21" y="130.5" width="1" height="1.5" fill="#4c4c4c"/><rect x="1379.90" y="130.5" width="1" height="1.5" fill="#4c4c4c"/><rect x="1382.60" y="130.5" width="1" height="1.5" fill="#4c4c4c"/><rect x="1385.30" y="118" width="1" height="14" fill="#505050"/><rect x="1388.00" y="130.5" width="1" height="1.5" fill="#4c4c4c"/><rect x="1390.70" y="130.5" width="1" height="1.5" fill="#4c4c4c"/><rect x="1393.39" y="130.5" width="1" height="1.5" fill="#4c4c4c"/><rect x="1396.09" y="130.5" width="1" height="1.5" fill="#4c4c4c"/><rect x="1398.79" y="128" width="1" height="4" fill="#555"/><rect x="1401.49" y="130.5" width="1" height="1.5" fill="#4c4c4c"/><rect x="44" y="134.69" width="2.5" height="1" fill="#444"/><rect x="44" y="137.40" width="2.5" height="1" fill="#444"/><rect x="32" y="140.10" width="14" height="1" fill="#5a5a5a"/><rect x="44" y="142.80" width="2.5" height="1" fill="#444"/><rect x="44" y="145.51" width="2.5" height="1" fill="#444"/><rect x="44" y="148.21" width="2.5" height="1" fill="#444"/><rect x="44" y="150.91" width="2.5" height="1" fill="#444"/><rect x="42" y="153.62" width="4" height="1" fill="#4a4a4a"/><rect x="44" y="156.32" width="2.5" height="1" fill="#444"/><rect x="44" y="159.02" width="2.5" height="1" fill="#444"/><rect x="44" y="161.72" width="2.5" height="1" fill="#444"/><rect x="44" y="164.43" width="2.5" height="1" fill="#444"/><rect x="32" y="167.13" width="14" height="1" fill="#5a5a5a"/><rect x="44" y="169.83" width="2.5" height="1" fill="#444"/><rect x="44" y="172.54" width="2.5" height="1" fill="#444"/><rect x="44" y="175.24" width="2.5" height="1" fill="#444"/><rect x="44" y="177.94" width="2.5" height="1" fill="#444"/><rect x="42" y="180.64" width="4" height="1" fill="#4a4a4a"/><rect x="44" y="183.35" width="2.5" height="1" fill="#444"/><rect x="44" y="186.05" width="2.5" height="1" fill="#444"/><rect x="44" y="188.75" width="2.5" height="1" fill="#444"/><rect x="44" y="191.46" width="2.5" height="1" fill="#444"/><rect x="32" y="194.16" width="14" height="1" fill="#5a5a5a"/><rect x="44" y="196.86" width="2.5" height="1" fill="#444"/><rect x="44" y="199.57" width="2.5" height="1" fill="#444"/><rect x="44" y="202.27" width="2.5" height="1" fill="#444"/><rect x="44" y="204.97" width="2.5" height="1" fill="#444"/><rect x="42" y="207.68" width="4" height="1" fill="#4a4a4a"/><rect x="44" y="210.38" width="2.5" height="1" fill="#444"/><rect x="44" y="213.08" width="2.5" height="1" fill="#444"/><rect x="44" y="215.78" width="2.5" height="1" fill="#444"/><rect x="44" y="218.49" width="2.5" height="1" fill="#444"/><rect x="32" y="221.19" width="14" height="1" fill="#5a5a5a"/><rect x="44" y="223.89" width="2.5" height="1" fill="#444"/><rect x="44" y="226.60" width="2.5" height="1" fill="#444"/><rect x="44" y="229.30" width="2.5" height="1" fill="#444"/><rect x="44" y="232.00" width="2.5" height="1" fill="#444"/><rect x="42" y="234.70" width="4" height="1" fill="#4a4a4a"/><rect x="44" y="237.41" width="2.5" height="1" fill="#444"/><rect x="44" y="240.11" width="2.5" height="1" fill="#444"/><rect x="44" y="242.81" width="2.5" height="1" fill="#444"/><rect x="44" y="245.52" width="2.5" height="1" fill="#444"/><rect x="32" y="248.22" width="14" height="1" fill="#5a5a5a"/><rect x="44" y="250.92" width="2.5" height="1" fill="#444"/><rect x="44" y="253.63" width="2.5" height="1" fill="#444"/><rect x="44" y="256.33" width="2.5" height="1" fill="#444"/><rect x="44" y="259.03" width="2.5" height="1" fill="#444"/><rect x="42" y="261.74" width="4" height="1" fill="#4a4a4a"/><rect x="44" y="264.44" width="2.5" height="1" fill="#444"/><rect x="44" y="267.14" width="2.5" height="1" fill="#444"/><rect x="44" y="269.84" width="2.5" height="1" fill="#444"/><rect x="44" y="272.55" width="2.5" height="1" fill="#444"/><rect x="32" y="275.25" width="14" height="1" fill="#5a5a5a"/><rect x="44" y="277.95" width="2.5" height="1" fill="#444"/><rect x="44" y="280.66" width="2.5" height="1" fill="#444"/><rect x="44" y="283.36" width="2.5" height="1" fill="#444"/><rect x="44" y="286.06" width="2.5" height="1" fill="#444"/><rect x="42" y="288.76" width="4" height="1" fill="#4a4a4a"/><rect x="44" y="291.47" width="2.5" height="1" fill="#444"/><rect x="44" y="294.17" width="2.5" height="1" fill="#444"/><rect x="44" y="296.87" width="2.5" height="1" fill="#444"/><rect x="44" y="299.58" width="2.5" height="1" fill="#444"/><rect x="32" y="302.28" width="14" height="1" fill="#5a5a5a"/><rect x="44" y="304.98" width="2.5" height="1" fill="#444"/><rect x="44" y="307.69" width="2.5" height="1" fill="#444"/><rect x="44" y="310.39" width="2.5" height="1" fill="#444"/><rect x="44" y="313.09" width="2.5" height="1" fill="#444"/><rect x="42" y="315.79" width="4" height="1" fill="#4a4a4a"/><rect x="44" y="318.50" width="2.5" height="1" fill="#444"/><rect x="44" y="321.20" width="2.5" height="1" fill="#444"/><rect x="44" y="323.90" width="2.5" height="1" fill="#444"/><rect x="44" y="326.61" width="2.5" height="1" fill="#444"/><rect x="32" y="329.31" width="14" height="1" fill="#5a5a5a"/><rect x="44" y="332.01" width="2.5" height="1" fill="#444"/><rect x="44" y="334.72" width="2.5" height="1" fill="#444"/><rect x="44" y="337.42" width="2.5" height="1" fill="#444"/><rect x="44" y="340.12" width="2.5" height="1" fill="#444"/><rect x="42" y="342.82" width="4" height="1" fill="#4a4a4a"/><rect x="44" y="345.53" width="2.5" height="1" fill="#444"/><rect x="44" y="348.23" width="2.5" height="1" fill="#444"/><rect x="44" y="350.93" width="2.5" height="1" fill="#444"/><rect x="44" y="353.64" width="2.5" height="1" fill="#444"/><rect x="32" y="356.34" width="14" height="1" fill="#5a5a5a"/><rect x="44" y="359.04" width="2.5" height="1" fill="#444"/><rect x="44" y="361.75" width="2.5" height="1" fill="#444"/><rect x="44" y="364.45" width="2.5" height="1" fill="#444"/><rect x="44" y="367.15" width="2.5" height="1" fill="#444"/><rect x="42" y="369.86" width="4" height="1" fill="#4a4a4a"/><rect x="44" y="372.56" width="2.5" height="1" fill="#444"/><rect x="44" y="375.26" width="2.5" height="1" fill="#444"/><rect x="44" y="377.96" width="2.5" height="1" fill="#444"/><rect x="44" y="380.67" width="2.5" height="1" fill="#444"/><rect x="32" y="383.37" width="14" height="1" fill="#5a5a5a"/><rect x="44" y="386.07" width="2.5" height="1" fill="#444"/><rect x="44" y="388.78" width="2.5" height="1" fill="#444"/><rect x="44" y="391.48" width="2.5" height="1" fill="#444"/><rect x="44" y="394.18" width="2.5" height="1" fill="#444"/><rect x="42" y="396.88" width="4" height="1" fill="#4a4a4a"/><rect x="44" y="399.59" width="2.5" height="1" fill="#444"/><rect x="44" y="402.29" width="2.5" height="1" fill="#444"/><rect x="44" y="404.99" width="2.5" height="1" fill="#444"/><rect x="44" y="407.70" width="2.5" height="1" fill="#444"/><rect x="32" y="410.40" width="14" height="1" fill="#5a5a5a"/><rect x="44" y="413.10" width="2.5" height="1" fill="#444"/><rect x="44" y="415.81" width="2.5" height="1" fill="#444"/><rect x="44" y="418.51" width="2.5" height="1" fill="#444"/><rect x="44" y="421.21" width="2.5" height="1" fill="#444"/><rect x="42" y="423.91" width="4" height="1" fill="#4a4a4a"/><rect x="44" y="426.62" width="2.5" height="1" fill="#444"/><rect x="44" y="429.32" width="2.5" height="1" fill="#444"/><rect x="44" y="432.02" width="2.5" height="1" fill="#444"/><rect x="44" y="434.73" width="2.5" height="1" fill="#444"/><rect x="32" y="437.43" width="14" height="1" fill="#5a5a5a"/><rect x="44" y="440.13" width="2.5" height="1" fill="#444"/><rect x="44" y="442.84" width="2.5" height="1" fill="#444"/><rect x="44" y="445.54" width="2.5" height="1" fill="#444"/><rect x="44" y="448.24" width="2.5" height="1" fill="#444"/><rect x="42" y="450.95" width="4" height="1" fill="#4a4a4a"/><rect x="44" y="453.65" width="2.5" height="1" fill="#444"/><rect x="44" y="456.35" width="2.5" height="1" fill="#444"/><rect x="44" y="459.05" width="2.5" height="1" fill="#444"/><rect x="44" y="461.76" width="2.5" height="1" fill="#444"/><rect x="32" y="464.46" width="14" height="1" fill="#5a5a5a"/><rect x="44" y="467.16" width="2.5" height="1" fill="#444"/><rect x="44" y="469.87" width="2.5" height="1" fill="#444"/><rect x="44" y="472.57" width="2.5" height="1" fill="#444"/><rect x="44" y="475.27" width="2.5" height="1" fill="#444"/><rect x="42" y="477.98" width="4" height="1" fill="#4a4a4a"/><rect x="44" y="480.68" width="2.5" height="1" fill="#444"/><rect x="44" y="483.38" width="2.5" height="1" fill="#444"/><rect x="44" y="486.08" width="2.5" height="1" fill="#444"/><rect x="44" y="488.79" width="2.5" height="1" fill="#444"/><rect x="32" y="491.49" width="14" height="1" fill="#5a5a5a"/><rect x="44" y="494.19" width="2.5" height="1" fill="#444"/><rect x="44" y="496.90" width="2.5" height="1" fill="#444"/><rect x="44" y="499.60" width="2.5" height="1" fill="#444"/><rect x="44" y="502.30" width="2.5" height="1" fill="#444"/><rect x="42" y="505.00" width="4" height="1" fill="#4a4a4a"/><rect x="44" y="507.71" width="2.5" height="1" fill="#444"/><rect x="44" y="510.41" width="2.5" height="1" fill="#444"/><rect x="44" y="513.11" width="2.5" height="1" fill="#444"/><rect x="44" y="515.82" width="2.5" height="1" fill="#444"/><rect x="32" y="518.52" width="14" height="1" fill="#5a5a5a"/><rect x="44" y="521.22" width="2.5" height="1" fill="#444"/><rect x="44" y="523.93" width="2.5" height="1" fill="#444"/><rect x="44" y="526.63" width="2.5" height="1" fill="#444"/><rect x="44" y="529.33" width="2.5" height="1" fill="#444"/><rect x="42" y="532.04" width="4" height="1" fill="#4a4a4a"/><rect x="44" y="534.74" width="2.5" height="1" fill="#444"/><rect x="44" y="537.44" width="2.5" height="1" fill="#444"/><rect x="44" y="540.14" width="2.5" height="1" fill="#444"/><rect x="44" y="542.85" width="2.5" height="1" fill="#444"/><rect x="32" y="545.55" width="14" height="1" fill="#5a5a5a"/><rect x="44" y="548.25" width="2.5" height="1" fill="#444"/><rect x="44" y="550.96" width="2.5" height="1" fill="#444"/><rect x="44" y="553.66" width="2.5" height="1" fill="#444"/><rect x="44" y="556.36" width="2.5" height="1" fill="#444"/><rect x="42" y="559.07" width="4" height="1" fill="#4a4a4a"/><rect x="44" y="561.77" width="2.5" height="1" fill="#444"/><rect x="44" y="564.47" width="2.5" height="1" fill="#444"/><rect x="44" y="567.17" width="2.5" height="1" fill="#444"/><rect x="44" y="569.88" width="2.5" height="1" fill="#444"/><rect x="32" y="572.58" width="14" height="1" fill="#5a5a5a"/><rect x="44" y="575.28" width="2.5" height="1" fill="#444"/><rect x="44" y="577.99" width="2.5" height="1" fill="#444"/><rect x="44" y="580.69" width="2.5" height="1" fill="#444"/><rect x="44" y="583.39" width="2.5" height="1" fill="#444"/><rect x="42" y="586.10" width="4" height="1" fill="#4a4a4a"/><rect x="44" y="588.80" width="2.5" height="1" fill="#444"/><rect x="44" y="591.50" width="2.5" height="1" fill="#444"/><rect x="44" y="594.20" width="2.5" height="1" fill="#444"/><rect x="44" y="596.91" width="2.5" height="1" fill="#444"/><rect x="32" y="599.61" width="14" height="1" fill="#5a5a5a"/><rect x="44" y="602.31" width="2.5" height="1" fill="#444"/><rect x="44" y="605.02" width="2.5" height="1" fill="#444"/><rect x="44" y="607.72" width="2.5" height="1" fill="#444"/><rect x="44" y="610.42" width="2.5" height="1" fill="#444"/><rect x="42" y="613.12" width="4" height="1" fill="#4a4a4a"/><rect x="44" y="615.83" width="2.5" height="1" fill="#444"/><rect x="44" y="618.53" width="2.5" height="1" fill="#444"/><rect x="44" y="621.23" width="2.5" height="1" fill="#444"/><rect x="44" y="623.94" width="2.5" height="1" fill="#444"/><rect x="32" y="626.64" width="14" height="1" fill="#5a5a5a"/><rect x="44" y="629.34" width="2.5" height="1" fill="#444"/><rect x="44" y="632.05" width="2.5" height="1" fill="#444"/><rect x="44" y="634.75" width="2.5" height="1" fill="#444"/><rect x="44" y="637.45" width="2.5" height="1" fill="#444"/><rect x="42" y="640.15" width="4" height="1" fill="#4a4a4a"/><rect x="44" y="642.86" width="2.5" height="1" fill="#444"/><rect x="44" y="645.56" width="2.5" height="1" fill="#444"/><rect x="44" y="648.26" width="2.5" height="1" fill="#444"/><rect x="44" y="650.97" width="2.5" height="1" fill="#444"/><rect x="32" y="653.67" width="14" height="1" fill="#5a5a5a"/><rect x="44" y="656.37" width="2.5" height="1" fill="#444"/><rect x="44" y="659.08" width="2.5" height="1" fill="#444"/><rect x="44" y="661.78" width="2.5" height="1" fill="#444"/><rect x="44" y="664.48" width="2.5" height="1" fill="#444"/><rect x="42" y="667.19" width="4" height="1" fill="#4a4a4a"/><rect x="44" y="669.89" width="2.5" height="1" fill="#444"/><rect x="44" y="672.59" width="2.5" height="1" fill="#444"/><rect x="44" y="675.29" width="2.5" height="1" fill="#444"/><rect x="44" y="678.00" width="2.5" height="1" fill="#444"/><rect x="32" y="680.70" width="14" height="1" fill="#5a5a5a"/><rect x="44" y="683.40" width="2.5" height="1" fill="#444"/><rect x="44" y="686.11" width="2.5" height="1" fill="#444"/><rect x="44" y="688.81" width="2.5" height="1" fill="#444"/><rect x="44" y="691.51" width="2.5" height="1" fill="#444"/><rect x="42" y="694.22" width="4" height="1" fill="#4a4a4a"/><rect x="44" y="696.92" width="2.5" height="1" fill="#444"/><rect x="44" y="699.62" width="2.5" height="1" fill="#444"/><rect x="44" y="702.32" width="2.5" height="1" fill="#444"/><rect x="44" y="705.03" width="2.5" height="1" fill="#444"/><rect x="32" y="707.73" width="14" height="1" fill="#5a5a5a"/><rect x="44" y="710.43" width="2.5" height="1" fill="#444"/><rect x="44" y="713.14" width="2.5" height="1" fill="#444"/><rect x="44" y="715.84" width="2.5" height="1" fill="#444"/><rect x="44" y="718.54" width="2.5" height="1" fill="#444"/><rect x="42" y="721.25" width="4" height="1" fill="#4a4a4a"/><rect x="44" y="723.95" width="2.5" height="1" fill="#444"/><rect x="44" y="726.65" width="2.5" height="1" fill="#444"/><rect x="44" y="729.35" width="2.5" height="1" fill="#444"/><rect x="44" y="732.06" width="2.5" height="1" fill="#444"/><rect x="32" y="734.76" width="14" height="1" fill="#5a5a5a"/><rect x="44" y="737.46" width="2.5" height="1" fill="#444"/><rect x="44" y="740.17" width="2.5" height="1" fill="#444"/><rect x="44" y="742.87" width="2.5" height="1" fill="#444"/><rect x="44" y="745.57" width="2.5" height="1" fill="#444"/><rect x="42" y="748.27" width="4" height="1" fill="#4a4a4a"/><rect x="44" y="750.98" width="2.5" height="1" fill="#444"/><rect x="44" y="753.68" width="2.5" height="1" fill="#444"/><rect x="44" y="756.38" width="2.5" height="1" fill="#444"/><rect x="44" y="759.09" width="2.5" height="1" fill="#444"/><rect x="32" y="761.79" width="14" height="1" fill="#5a5a5a"/><rect x="44" y="764.49" width="2.5" height="1" fill="#444"/><rect x="44" y="767.20" width="2.5" height="1" fill="#444"/><rect x="44" y="769.90" width="2.5" height="1" fill="#444"/><rect x="44" y="772.60" width="2.5" height="1" fill="#444"/><rect x="42" y="775.31" width="4" height="1" fill="#4a4a4a"/><rect x="44" y="778.01" width="2.5" height="1" fill="#444"/><rect x="44" y="780.71" width="2.5" height="1" fill="#444"/><rect x="44" y="783.41" width="2.5" height="1" fill="#444"/><rect x="44" y="786.12" width="2.5" height="1" fill="#444"/><rect x="32" y="788.82" width="14" height="1" fill="#5a5a5a"/><rect x="44" y="791.52" width="2.5" height="1" fill="#444"/><rect x="44" y="794.23" width="2.5" height="1" fill="#444"/><rect x="44" y="796.93" width="2.5" height="1" fill="#444"/><rect x="44" y="799.63" width="2.5" height="1" fill="#444"/><rect x="42" y="802.34" width="4" height="1" fill="#4a4a4a"/><rect x="44" y="805.04" width="2.5" height="1" fill="#444"/><rect x="44" y="807.74" width="2.5" height="1" fill="#444"/><rect x="44" y="810.44" width="2.5" height="1" fill="#444"/><rect x="44" y="813.15" width="2.5" height="1" fill="#444"/><rect x="32" y="815.85" width="14" height="1" fill="#5a5a5a"/><rect x="44" y="818.55" width="2.5" height="1" fill="#444"/><rect x="44" y="821.26" width="2.5" height="1" fill="#444"/><rect x="44" y="823.96" width="2.5" height="1" fill="#444"/><rect x="44" y="826.66" width="2.5" height="1" fill="#444"/><rect x="42" y="829.37" width="4" height="1" fill="#4a4a4a"/><rect x="44" y="832.07" width="2.5" height="1" fill="#444"/><rect x="44" y="834.77" width="2.5" height="1" fill="#444"/><rect x="44" y="837.47" width="2.5" height="1" fill="#444"/><rect x="44" y="840.18" width="2.5" height="1" fill="#444"/><rect x="32" y="842.88" width="14" height="1" fill="#5a5a5a"/><rect x="44" y="845.58" width="2.5" height="1" fill="#444"/><rect x="44" y="848.29" width="2.5" height="1" fill="#444"/><rect x="44" y="850.99" width="2.5" height="1" fill="#444"/><rect x="44" y="853.69" width="2.5" height="1" fill="#444"/><rect x="42" y="856.40" width="4" height="1" fill="#4a4a4a"/><rect x="44" y="859.10" width="2.5" height="1" fill="#444"/><rect x="44" y="861.80" width="2.5" height="1" fill="#444"/><rect x="44" y="864.50" width="2.5" height="1" fill="#444"/><rect x="44" y="867.21" width="2.5" height="1" fill="#444"/><rect x="32" y="869.91" width="14" height="1" fill="#5a5a5a"/><rect x="44" y="872.61" width="2.5" height="1" fill="#444"/><rect x="44" y="875.32" width="2.5" height="1" fill="#444"/><rect x="44" y="878.02" width="2.5" height="1" fill="#444"/><rect x="44" y="880.72" width="2.5" height="1" fill="#444"/><rect x="42" y="883.43" width="4" height="1" fill="#4a4a4a"/><rect x="44" y="886.13" width="2.5" height="1" fill="#444"/><rect x="44" y="888.83" width="2.5" height="1" fill="#444"/><rect x="44" y="891.53" width="2.5" height="1" fill="#444"/><rect x="44" y="894.24" width="2.5" height="1" fill="#444"/><rect x="32" y="896.94" width="14" height="1" fill="#5a5a5a"/><rect x="44" y="899.64" width="2.5" height="1" fill="#444"/><rect x="44" y="902.35" width="2.5" height="1" fill="#444"/><rect x="44" y="905.05" width="2.5" height="1" fill="#444"/><rect x="44" y="907.75" width="2.5" height="1" fill="#444"/><rect x="42" y="910.46" width="4" height="1" fill="#4a4a4a"/><rect x="44" y="913.16" width="2.5" height="1" fill="#444"/><rect x="44" y="915.86" width="2.5" height="1" fill="#444"/><rect x="44" y="918.56" width="2.5" height="1" fill="#444"/><rect x="44" y="921.27" width="2.5" height="1" fill="#444"/><rect x="32" y="923.97" width="14" height="1" fill="#5a5a5a"/><rect x="44" y="926.67" width="2.5" height="1" fill="#444"/><rect x="44" y="929.38" width="2.5" height="1" fill="#444"/></svg><div class="a" style="left:46px;top:118px;width:1357px;height:14px;overflow:hidden"><div class="a" style="left:-8.70px;top:0;width:25.98px;height:14px;overflow:hidden"><div class="a t" style="left:1.00px;top:1.11px;font-size:10.5px;line-height:10.5px;font-weight:400;color:#e6e6e6;-webkit-text-stroke:0.3px #e6e6e6">150</div></div><div class="a" style="left:18.28px;top:0;width:25.98px;height:14px;overflow:hidden"><div class="a t" style="left:1.00px;top:1.11px;font-size:10.5px;line-height:10.5px;font-weight:400;color:#e6e6e6;-webkit-text-stroke:0.3px #e6e6e6">140</div></div><div class="a" style="left:45.26px;top:0;width:25.98px;height:14px;overflow:hidden"><div class="a t" style="left:1.00px;top:1.11px;font-size:10.5px;line-height:10.5px;font-weight:400;color:#e6e6e6;-webkit-text-stroke:0.3px #e6e6e6">130</div></div><div class="a" style="left:72.24px;top:0;width:25.98px;height:14px;overflow:hidden"><div class="a t" style="left:1.00px;top:1.11px;font-size:10.5px;line-height:10.5px;font-weight:400;color:#e6e6e6;-webkit-text-stroke:0.3px #e6e6e6">120</div></div><div class="a" style="left:99.22px;top:0;width:25.98px;height:14px;overflow:hidden"><div class="a t" style="left:1.00px;top:1.11px;font-size:10.5px;line-height:10.5px;font-weight:400;color:#e6e6e6;-webkit-text-stroke:0.3px #e6e6e6">110</div></div><div class="a" style="left:126.20px;top:0;width:25.98px;height:14px;overflow:hidden"><div class="a t" style="left:1.00px;top:1.11px;font-size:10.5px;line-height:10.5px;font-weight:400;color:#e6e6e6;-webkit-text-stroke:0.3px #e6e6e6">100</div></div><div class="a" style="left:153.18px;top:0;width:25.98px;height:14px;overflow:hidden"><div class="a t" style="left:1.00px;top:1.11px;font-size:10.5px;line-height:10.5px;font-weight:400;color:#e6e6e6;-webkit-text-stroke:0.3px #e6e6e6">90</div></div><div class="a" style="left:180.16px;top:0;width:25.98px;height:14px;overflow:hidden"><div class="a t" style="left:1.00px;top:1.11px;font-size:10.5px;line-height:10.5px;font-weight:400;color:#e6e6e6;-webkit-text-stroke:0.3px #e6e6e6">80</div></div><div class="a" style="left:207.14px;top:0;width:25.98px;height:14px;overflow:hidden"><div class="a t" style="left:1.00px;top:1.11px;font-size:10.5px;line-height:10.5px;font-weight:400;color:#e6e6e6;-webkit-text-stroke:0.3px #e6e6e6">70</div></div><div class="a" style="left:234.12px;top:0;width:25.98px;height:14px;overflow:hidden"><div class="a t" style="left:1.00px;top:1.11px;font-size:10.5px;line-height:10.5px;font-weight:400;color:#e6e6e6;-webkit-text-stroke:0.3px #e6e6e6">60</div></div><div class="a" style="left:261.10px;top:0;width:25.98px;height:14px;overflow:hidden"><div class="a t" style="left:1.00px;top:1.11px;font-size:10.5px;line-height:10.5px;font-weight:400;color:#e6e6e6;-webkit-text-stroke:0.3px #e6e6e6">50</div></div><div class="a" style="left:288.08px;top:0;width:25.98px;height:14px;overflow:hidden"><div class="a t" style="left:1.00px;top:1.11px;font-size:10.5px;line-height:10.5px;font-weight:400;color:#e6e6e6;-webkit-text-stroke:0.3px #e6e6e6">40</div></div><div class="a" style="left:315.06px;top:0;width:25.98px;height:14px;overflow:hidden"><div class="a t" style="left:1.00px;top:1.11px;font-size:10.5px;line-height:10.5px;font-weight:400;color:#e6e6e6;-webkit-text-stroke:0.3px #e6e6e6">30</div></div><div class="a" style="left:342.04px;top:0;width:25.98px;height:14px;overflow:hidden"><div class="a t" style="left:1.00px;top:1.11px;font-size:10.5px;line-height:10.5px;font-weight:400;color:#e6e6e6;-webkit-text-stroke:0.3px #e6e6e6">20</div></div><div class="a" style="left:369.02px;top:0;width:25.98px;height:14px;overflow:hidden"><div class="a t" style="left:1.00px;top:1.11px;font-size:10.5px;line-height:10.5px;font-weight:400;color:#e6e6e6;-webkit-text-stroke:0.3px #e6e6e6">10</div></div><div class="a" style="left:396.00px;top:0;width:25.98px;height:14px;overflow:hidden"><div class="a t" style="left:1.00px;top:1.11px;font-size:10.5px;line-height:10.5px;font-weight:400;color:#e6e6e6;-webkit-text-stroke:0.3px #e6e6e6">0</div></div><div class="a" style="left:422.98px;top:0;width:25.98px;height:14px;overflow:hidden"><div class="a t" style="left:1.00px;top:1.11px;font-size:10.5px;line-height:10.5px;font-weight:400;color:#e6e6e6;-webkit-text-stroke:0.3px #e6e6e6">10</div></div><div class="a" style="left:449.96px;top:0;width:25.98px;height:14px;overflow:hidden"><div class="a t" style="left:1.00px;top:1.11px;font-size:10.5px;line-height:10.5px;font-weight:400;color:#e6e6e6;-webkit-text-stroke:0.3px #e6e6e6">20</div></div><div class="a" style="left:476.94px;top:0;width:25.98px;height:14px;overflow:hidden"><div class="a t" style="left:1.00px;top:1.11px;font-size:10.5px;line-height:10.5px;font-weight:400;color:#e6e6e6;-webkit-text-stroke:0.3px #e6e6e6">30</div></div><div class="a" style="left:503.92px;top:0;width:25.98px;height:14px;overflow:hidden"><div class="a t" style="left:1.00px;top:1.11px;font-size:10.5px;line-height:10.5px;font-weight:400;color:#e6e6e6;-webkit-text-stroke:0.3px #e6e6e6">40</div></div><div class="a" style="left:530.90px;top:0;width:25.98px;height:14px;overflow:hidden"><div class="a t" style="left:1.00px;top:1.11px;font-size:10.5px;line-height:10.5px;font-weight:400;color:#e6e6e6;-webkit-text-stroke:0.3px #e6e6e6">50</div></div><div class="a" style="left:557.88px;top:0;width:25.98px;height:14px;overflow:hidden"><div class="a t" style="left:1.00px;top:1.11px;font-size:10.5px;line-height:10.5px;font-weight:400;color:#e6e6e6;-webkit-text-stroke:0.3px #e6e6e6">60</div></div><div class="a" style="left:584.86px;top:0;width:25.98px;height:14px;overflow:hidden"><div class="a t" style="left:1.00px;top:1.11px;font-size:10.5px;line-height:10.5px;font-weight:400;color:#e6e6e6;-webkit-text-stroke:0.3px #e6e6e6">70</div></div><div class="a" style="left:611.84px;top:0;width:25.98px;height:14px;overflow:hidden"><div class="a t" style="left:1.00px;top:1.11px;font-size:10.5px;line-height:10.5px;font-weight:400;color:#e6e6e6;-webkit-text-stroke:0.3px #e6e6e6">80</div></div><div class="a" style="left:638.82px;top:0;width:25.98px;height:14px;overflow:hidden"><div class="a t" style="left:1.00px;top:1.11px;font-size:10.5px;line-height:10.5px;font-weight:400;color:#e6e6e6;-webkit-text-stroke:0.3px #e6e6e6">90</div></div><div class="a" style="left:665.80px;top:0;width:25.98px;height:14px;overflow:hidden"><div class="a t" style="left:1.00px;top:1.11px;font-size:10.5px;line-height:10.5px;font-weight:400;color:#e6e6e6;-webkit-text-stroke:0.3px #e6e6e6">100</div></div><div class="a" style="left:692.78px;top:0;width:25.98px;height:14px;overflow:hidden"><div class="a t" style="left:1.00px;top:1.11px;font-size:10.5px;line-height:10.5px;font-weight:400;color:#e6e6e6;-webkit-text-stroke:0.3px #e6e6e6">110</div></div><div class="a" style="left:719.76px;top:0;width:25.98px;height:14px;overflow:hidden"><div class="a t" style="left:1.00px;top:1.11px;font-size:10.5px;line-height:10.5px;font-weight:400;color:#e6e6e6;-webkit-text-stroke:0.3px #e6e6e6">120</div></div><div class="a" style="left:746.74px;top:0;width:25.98px;height:14px;overflow:hidden"><div class="a t" style="left:1.00px;top:1.11px;font-size:10.5px;line-height:10.5px;font-weight:400;color:#e6e6e6;-webkit-text-stroke:0.3px #e6e6e6">130</div></div><div class="a" style="left:773.72px;top:0;width:25.98px;height:14px;overflow:hidden"><div class="a t" style="left:1.00px;top:1.11px;font-size:10.5px;line-height:10.5px;font-weight:400;color:#e6e6e6;-webkit-text-stroke:0.3px #e6e6e6">140</div></div><div class="a" style="left:800.70px;top:0;width:25.98px;height:14px;overflow:hidden"><div class="a t" style="left:1.00px;top:1.11px;font-size:10.5px;line-height:10.5px;font-weight:400;color:#e6e6e6;-webkit-text-stroke:0.3px #e6e6e6">150</div></div><div class="a" style="left:827.68px;top:0;width:25.98px;height:14px;overflow:hidden"><div class="a t" style="left:1.00px;top:1.11px;font-size:10.5px;line-height:10.5px;font-weight:400;color:#e6e6e6;-webkit-text-stroke:0.3px #e6e6e6">160</div></div><div class="a" style="left:854.66px;top:0;width:25.98px;height:14px;overflow:hidden"><div class="a t" style="left:1.00px;top:1.11px;font-size:10.5px;line-height:10.5px;font-weight:400;color:#e6e6e6;-webkit-text-stroke:0.3px #e6e6e6">170</div></div><div class="a" style="left:881.64px;top:0;width:25.98px;height:14px;overflow:hidden"><div class="a t" style="left:1.00px;top:1.11px;font-size:10.5px;line-height:10.5px;font-weight:400;color:#e6e6e6;-webkit-text-stroke:0.3px #e6e6e6">180</div></div><div class="a" style="left:908.62px;top:0;width:25.98px;height:14px;overflow:hidden"><div class="a t" style="left:1.00px;top:1.11px;font-size:10.5px;line-height:10.5px;font-weight:400;color:#e6e6e6;-webkit-text-stroke:0.3px #e6e6e6">190</div></div><div class="a" style="left:935.60px;top:0;width:25.98px;height:14px;overflow:hidden"><div class="a t" style="left:1.00px;top:1.11px;font-size:10.5px;line-height:10.5px;font-weight:400;color:#e6e6e6;-webkit-text-stroke:0.3px #e6e6e6">200</div></div><div class="a" style="left:962.58px;top:0;width:25.98px;height:14px;overflow:hidden"><div class="a t" style="left:1.00px;top:1.11px;font-size:10.5px;line-height:10.5px;font-weight:400;color:#e6e6e6;-webkit-text-stroke:0.3px #e6e6e6">210</div></div><div class="a" style="left:989.56px;top:0;width:25.98px;height:14px;overflow:hidden"><div class="a t" style="left:1.00px;top:1.11px;font-size:10.5px;line-height:10.5px;font-weight:400;color:#e6e6e6;-webkit-text-stroke:0.3px #e6e6e6">220</div></div><div class="a" style="left:1016.54px;top:0;width:25.98px;height:14px;overflow:hidden"><div class="a t" style="left:1.00px;top:1.11px;font-size:10.5px;line-height:10.5px;font-weight:400;color:#e6e6e6;-webkit-text-stroke:0.3px #e6e6e6">230</div></div><div class="a" style="left:1043.52px;top:0;width:25.98px;height:14px;overflow:hidden"><div class="a t" style="left:1.00px;top:1.11px;font-size:10.5px;line-height:10.5px;font-weight:400;color:#e6e6e6;-webkit-text-stroke:0.3px #e6e6e6">240</div></div><div class="a" style="left:1070.50px;top:0;width:25.98px;height:14px;overflow:hidden"><div class="a t" style="left:1.00px;top:1.11px;font-size:10.5px;line-height:10.5px;font-weight:400;color:#e6e6e6;-webkit-text-stroke:0.3px #e6e6e6">250</div></div><div class="a" style="left:1097.48px;top:0;width:25.98px;height:14px;overflow:hidden"><div class="a t" style="left:1.00px;top:1.11px;font-size:10.5px;line-height:10.5px;font-weight:400;color:#e6e6e6;-webkit-text-stroke:0.3px #e6e6e6">260</div></div><div class="a" style="left:1124.46px;top:0;width:25.98px;height:14px;overflow:hidden"><div class="a t" style="left:1.00px;top:1.11px;font-size:10.5px;line-height:10.5px;font-weight:400;color:#e6e6e6;-webkit-text-stroke:0.3px #e6e6e6">270</div></div><div class="a" style="left:1151.44px;top:0;width:25.98px;height:14px;overflow:hidden"><div class="a t" style="left:1.00px;top:1.11px;font-size:10.5px;line-height:10.5px;font-weight:400;color:#e6e6e6;-webkit-text-stroke:0.3px #e6e6e6">280</div></div><div class="a" style="left:1178.42px;top:0;width:25.98px;height:14px;overflow:hidden"><div class="a t" style="left:1.00px;top:1.11px;font-size:10.5px;line-height:10.5px;font-weight:400;color:#e6e6e6;-webkit-text-stroke:0.3px #e6e6e6">290</div></div><div class="a" style="left:1205.40px;top:0;width:25.98px;height:14px;overflow:hidden"><div class="a t" style="left:1.00px;top:1.11px;font-size:10.5px;line-height:10.5px;font-weight:400;color:#e6e6e6;-webkit-text-stroke:0.3px #e6e6e6">300</div></div><div class="a" style="left:1232.38px;top:0;width:25.98px;height:14px;overflow:hidden"><div class="a t" style="left:1.00px;top:1.11px;font-size:10.5px;line-height:10.5px;font-weight:400;color:#e6e6e6;-webkit-text-stroke:0.3px #e6e6e6">310</div></div><div class="a" style="left:1259.36px;top:0;width:25.98px;height:14px;overflow:hidden"><div class="a t" style="left:1.00px;top:1.11px;font-size:10.5px;line-height:10.5px;font-weight:400;color:#e6e6e6;-webkit-text-stroke:0.3px #e6e6e6">320</div></div><div class="a" style="left:1286.34px;top:0;width:25.98px;height:14px;overflow:hidden"><div class="a t" style="left:1.00px;top:1.11px;font-size:10.5px;line-height:10.5px;font-weight:400;color:#e6e6e6;-webkit-text-stroke:0.3px #e6e6e6">330</div></div><div class="a" style="left:1313.32px;top:0;width:25.98px;height:14px;overflow:hidden"><div class="a t" style="left:1.00px;top:1.11px;font-size:10.5px;line-height:10.5px;font-weight:400;color:#e6e6e6;-webkit-text-stroke:0.3px #e6e6e6">340</div></div><div class="a" style="left:1340.30px;top:0;width:25.98px;height:14px;overflow:hidden"><div class="a t" style="left:1.00px;top:1.11px;font-size:10.5px;line-height:10.5px;font-weight:400;color:#e6e6e6;-webkit-text-stroke:0.3px #e6e6e6">350</div></div></div><div class="a" style="left:32px;top:133px;width:13px;height:799px;overflow:hidden"><div class="a" style="left:0;top:-18.93px;width:13px;height:26.03px;overflow:hidden"><div class="a t" style="left:2.30px;top:0.97px;font-size:10.2px;line-height:10.2px;font-weight:400;color:#e6e6e6;-webkit-text-stroke:0.3px #e6e6e6">1</div><div class="a t" style="left:2.30px;top:9.77px;font-size:10.2px;line-height:10.2px;font-weight:400;color:#e6e6e6;-webkit-text-stroke:0.3px #e6e6e6">0</div></div><div class="a" style="left:0;top:8.10px;width:13px;height:26.03px;overflow:hidden"><div class="a t" style="left:2.30px;top:0.97px;font-size:10.2px;line-height:10.2px;font-weight:400;color:#e6e6e6;-webkit-text-stroke:0.3px #e6e6e6">0</div></div><div class="a" style="left:0;top:35.13px;width:13px;height:26.03px;overflow:hidden"><div class="a t" style="left:2.30px;top:0.97px;font-size:10.2px;line-height:10.2px;font-weight:400;color:#e6e6e6;-webkit-text-stroke:0.3px #e6e6e6">1</div><div class="a t" style="left:2.30px;top:9.77px;font-size:10.2px;line-height:10.2px;font-weight:400;color:#e6e6e6;-webkit-text-stroke:0.3px #e6e6e6">0</div></div><div class="a" style="left:0;top:62.16px;width:13px;height:26.03px;overflow:hidden"><div class="a t" style="left:2.30px;top:0.97px;font-size:10.2px;line-height:10.2px;font-weight:400;color:#e6e6e6;-webkit-text-stroke:0.3px #e6e6e6">2</div><div class="a t" style="left:2.30px;top:9.77px;font-size:10.2px;line-height:10.2px;font-weight:400;color:#e6e6e6;-webkit-text-stroke:0.3px #e6e6e6">0</div></div><div class="a" style="left:0;top:89.19px;width:13px;height:26.03px;overflow:hidden"><div class="a t" style="left:2.30px;top:0.97px;font-size:10.2px;line-height:10.2px;font-weight:400;color:#e6e6e6;-webkit-text-stroke:0.3px #e6e6e6">3</div><div class="a t" style="left:2.30px;top:9.77px;font-size:10.2px;line-height:10.2px;font-weight:400;color:#e6e6e6;-webkit-text-stroke:0.3px #e6e6e6">0</div></div><div class="a" style="left:0;top:116.22px;width:13px;height:26.03px;overflow:hidden"><div class="a t" style="left:2.30px;top:0.97px;font-size:10.2px;line-height:10.2px;font-weight:400;color:#e6e6e6;-webkit-text-stroke:0.3px #e6e6e6">4</div><div class="a t" style="left:2.30px;top:9.77px;font-size:10.2px;line-height:10.2px;font-weight:400;color:#e6e6e6;-webkit-text-stroke:0.3px #e6e6e6">0</div></div><div class="a" style="left:0;top:143.25px;width:13px;height:26.03px;overflow:hidden"><div class="a t" style="left:2.30px;top:0.97px;font-size:10.2px;line-height:10.2px;font-weight:400;color:#e6e6e6;-webkit-text-stroke:0.3px #e6e6e6">5</div><div class="a t" style="left:2.30px;top:9.77px;font-size:10.2px;line-height:10.2px;font-weight:400;color:#e6e6e6;-webkit-text-stroke:0.3px #e6e6e6">0</div></div><div class="a" style="left:0;top:170.28px;width:13px;height:26.03px;overflow:hidden"><div class="a t" style="left:2.30px;top:0.97px;font-size:10.2px;line-height:10.2px;font-weight:400;color:#e6e6e6;-webkit-text-stroke:0.3px #e6e6e6">6</div><div class="a t" style="left:2.30px;top:9.77px;font-size:10.2px;line-height:10.2px;font-weight:400;color:#e6e6e6;-webkit-text-stroke:0.3px #e6e6e6">0</div></div><div class="a" style="left:0;top:197.31px;width:13px;height:26.03px;overflow:hidden"><div class="a t" style="left:2.30px;top:0.97px;font-size:10.2px;line-height:10.2px;font-weight:400;color:#e6e6e6;-webkit-text-stroke:0.3px #e6e6e6">7</div><div class="a t" style="left:2.30px;top:9.77px;font-size:10.2px;line-height:10.2px;font-weight:400;color:#e6e6e6;-webkit-text-stroke:0.3px #e6e6e6">0</div></div><div class="a" style="left:0;top:224.34px;width:13px;height:26.03px;overflow:hidden"><div class="a t" style="left:2.30px;top:0.97px;font-size:10.2px;line-height:10.2px;font-weight:400;color:#e6e6e6;-webkit-text-stroke:0.3px #e6e6e6">8</div><div class="a t" style="left:2.30px;top:9.77px;font-size:10.2px;line-height:10.2px;font-weight:400;color:#e6e6e6;-webkit-text-stroke:0.3px #e6e6e6">0</div></div><div class="a" style="left:0;top:251.37px;width:13px;height:26.03px;overflow:hidden"><div class="a t" style="left:2.30px;top:0.97px;font-size:10.2px;line-height:10.2px;font-weight:400;color:#e6e6e6;-webkit-text-stroke:0.3px #e6e6e6">9</div><div class="a t" style="left:2.30px;top:9.77px;font-size:10.2px;line-height:10.2px;font-weight:400;color:#e6e6e6;-webkit-text-stroke:0.3px #e6e6e6">0</div></div><div class="a" style="left:0;top:278.40px;width:13px;height:26.03px;overflow:hidden"><div class="a t" style="left:2.30px;top:0.97px;font-size:10.2px;line-height:10.2px;font-weight:400;color:#e6e6e6;-webkit-text-stroke:0.3px #e6e6e6">1</div><div class="a t" style="left:2.30px;top:9.77px;font-size:10.2px;line-height:10.2px;font-weight:400;color:#e6e6e6;-webkit-text-stroke:0.3px #e6e6e6">0</div><div class="a t" style="left:2.30px;top:18.57px;font-size:10.2px;line-height:10.2px;font-weight:400;color:#e6e6e6;-webkit-text-stroke:0.3px #e6e6e6">0</div></div><div class="a" style="left:0;top:305.43px;width:13px;height:26.03px;overflow:hidden"><div class="a t" style="left:2.30px;top:0.97px;font-size:10.2px;line-height:10.2px;font-weight:400;color:#e6e6e6;-webkit-text-stroke:0.3px #e6e6e6">1</div><div class="a t" style="left:2.30px;top:9.77px;font-size:10.2px;line-height:10.2px;font-weight:400;color:#e6e6e6;-webkit-text-stroke:0.3px #e6e6e6">1</div><div class="a t" style="left:2.30px;top:18.57px;font-size:10.2px;line-height:10.2px;font-weight:400;color:#e6e6e6;-webkit-text-stroke:0.3px #e6e6e6">0</div></div><div class="a" style="left:0;top:332.46px;width:13px;height:26.03px;overflow:hidden"><div class="a t" style="left:2.30px;top:0.97px;font-size:10.2px;line-height:10.2px;font-weight:400;color:#e6e6e6;-webkit-text-stroke:0.3px #e6e6e6">1</div><div class="a t" style="left:2.30px;top:9.77px;font-size:10.2px;line-height:10.2px;font-weight:400;color:#e6e6e6;-webkit-text-stroke:0.3px #e6e6e6">2</div><div class="a t" style="left:2.30px;top:18.57px;font-size:10.2px;line-height:10.2px;font-weight:400;color:#e6e6e6;-webkit-text-stroke:0.3px #e6e6e6">0</div></div><div class="a" style="left:0;top:359.49px;width:13px;height:26.03px;overflow:hidden"><div class="a t" style="left:2.30px;top:0.97px;font-size:10.2px;line-height:10.2px;font-weight:400;color:#e6e6e6;-webkit-text-stroke:0.3px #e6e6e6">1</div><div class="a t" style="left:2.30px;top:9.77px;font-size:10.2px;line-height:10.2px;font-weight:400;color:#e6e6e6;-webkit-text-stroke:0.3px #e6e6e6">3</div><div class="a t" style="left:2.30px;top:18.57px;font-size:10.2px;line-height:10.2px;font-weight:400;color:#e6e6e6;-webkit-text-stroke:0.3px #e6e6e6">0</div></div><div class="a" style="left:0;top:386.52px;width:13px;height:26.03px;overflow:hidden"><div class="a t" style="left:2.30px;top:0.97px;font-size:10.2px;line-height:10.2px;font-weight:400;color:#e6e6e6;-webkit-text-stroke:0.3px #e6e6e6">1</div><div class="a t" style="left:2.30px;top:9.77px;font-size:10.2px;line-height:10.2px;font-weight:400;color:#e6e6e6;-webkit-text-stroke:0.3px #e6e6e6">4</div><div class="a t" style="left:2.30px;top:18.57px;font-size:10.2px;line-height:10.2px;font-weight:400;color:#e6e6e6;-webkit-text-stroke:0.3px #e6e6e6">0</div></div><div class="a" style="left:0;top:413.55px;width:13px;height:26.03px;overflow:hidden"><div class="a t" style="left:2.30px;top:0.97px;font-size:10.2px;line-height:10.2px;font-weight:400;color:#e6e6e6;-webkit-text-stroke:0.3px #e6e6e6">1</div><div class="a t" style="left:2.30px;top:9.77px;font-size:10.2px;line-height:10.2px;font-weight:400;color:#e6e6e6;-webkit-text-stroke:0.3px #e6e6e6">5</div><div class="a t" style="left:2.30px;top:18.57px;font-size:10.2px;line-height:10.2px;font-weight:400;color:#e6e6e6;-webkit-text-stroke:0.3px #e6e6e6">0</div></div><div class="a" style="left:0;top:440.58px;width:13px;height:26.03px;overflow:hidden"><div class="a t" style="left:2.30px;top:0.97px;font-size:10.2px;line-height:10.2px;font-weight:400;color:#e6e6e6;-webkit-text-stroke:0.3px #e6e6e6">1</div><div class="a t" style="left:2.30px;top:9.77px;font-size:10.2px;line-height:10.2px;font-weight:400;color:#e6e6e6;-webkit-text-stroke:0.3px #e6e6e6">6</div><div class="a t" style="left:2.30px;top:18.57px;font-size:10.2px;line-height:10.2px;font-weight:400;color:#e6e6e6;-webkit-text-stroke:0.3px #e6e6e6">0</div></div><div class="a" style="left:0;top:467.61px;width:13px;height:26.03px;overflow:hidden"><div class="a t" style="left:2.30px;top:0.97px;font-size:10.2px;line-height:10.2px;font-weight:400;color:#e6e6e6;-webkit-text-stroke:0.3px #e6e6e6">1</div><div class="a t" style="left:2.30px;top:9.77px;font-size:10.2px;line-height:10.2px;font-weight:400;color:#e6e6e6;-webkit-text-stroke:0.3px #e6e6e6">7</div><div class="a t" style="left:2.30px;top:18.57px;font-size:10.2px;line-height:10.2px;font-weight:400;color:#e6e6e6;-webkit-text-stroke:0.3px #e6e6e6">0</div></div><div class="a" style="left:0;top:494.64px;width:13px;height:26.03px;overflow:hidden"><div class="a t" style="left:2.30px;top:0.97px;font-size:10.2px;line-height:10.2px;font-weight:400;color:#e6e6e6;-webkit-text-stroke:0.3px #e6e6e6">1</div><div class="a t" style="left:2.30px;top:9.77px;font-size:10.2px;line-height:10.2px;font-weight:400;color:#e6e6e6;-webkit-text-stroke:0.3px #e6e6e6">8</div><div class="a t" style="left:2.30px;top:18.57px;font-size:10.2px;line-height:10.2px;font-weight:400;color:#e6e6e6;-webkit-text-stroke:0.3px #e6e6e6">0</div></div><div class="a" style="left:0;top:521.67px;width:13px;height:26.03px;overflow:hidden"><div class="a t" style="left:2.30px;top:0.97px;font-size:10.2px;line-height:10.2px;font-weight:400;color:#e6e6e6;-webkit-text-stroke:0.3px #e6e6e6">1</div><div class="a t" style="left:2.30px;top:9.77px;font-size:10.2px;line-height:10.2px;font-weight:400;color:#e6e6e6;-webkit-text-stroke:0.3px #e6e6e6">9</div><div class="a t" style="left:2.30px;top:18.57px;font-size:10.2px;line-height:10.2px;font-weight:400;color:#e6e6e6;-webkit-text-stroke:0.3px #e6e6e6">0</div></div><div class="a" style="left:0;top:548.70px;width:13px;height:26.03px;overflow:hidden"><div class="a t" style="left:2.30px;top:0.97px;font-size:10.2px;line-height:10.2px;font-weight:400;color:#e6e6e6;-webkit-text-stroke:0.3px #e6e6e6">2</div><div class="a t" style="left:2.30px;top:9.77px;font-size:10.2px;line-height:10.2px;font-weight:400;color:#e6e6e6;-webkit-text-stroke:0.3px #e6e6e6">0</div><div class="a t" style="left:2.30px;top:18.57px;font-size:10.2px;line-height:10.2px;font-weight:400;color:#e6e6e6;-webkit-text-stroke:0.3px #e6e6e6">0</div></div><div class="a" style="left:0;top:575.73px;width:13px;height:26.03px;overflow:hidden"><div class="a t" style="left:2.30px;top:0.97px;font-size:10.2px;line-height:10.2px;font-weight:400;color:#e6e6e6;-webkit-text-stroke:0.3px #e6e6e6">2</div><div class="a t" style="left:2.30px;top:9.77px;font-size:10.2px;line-height:10.2px;font-weight:400;color:#e6e6e6;-webkit-text-stroke:0.3px #e6e6e6">1</div><div class="a t" style="left:2.30px;top:18.57px;font-size:10.2px;line-height:10.2px;font-weight:400;color:#e6e6e6;-webkit-text-stroke:0.3px #e6e6e6">0</div></div><div class="a" style="left:0;top:602.76px;width:13px;height:26.03px;overflow:hidden"><div class="a t" style="left:2.30px;top:0.97px;font-size:10.2px;line-height:10.2px;font-weight:400;color:#e6e6e6;-webkit-text-stroke:0.3px #e6e6e6">2</div><div class="a t" style="left:2.30px;top:9.77px;font-size:10.2px;line-height:10.2px;font-weight:400;color:#e6e6e6;-webkit-text-stroke:0.3px #e6e6e6">2</div><div class="a t" style="left:2.30px;top:18.57px;font-size:10.2px;line-height:10.2px;font-weight:400;color:#e6e6e6;-webkit-text-stroke:0.3px #e6e6e6">0</div></div><div class="a" style="left:0;top:629.79px;width:13px;height:26.03px;overflow:hidden"><div class="a t" style="left:2.30px;top:0.97px;font-size:10.2px;line-height:10.2px;font-weight:400;color:#e6e6e6;-webkit-text-stroke:0.3px #e6e6e6">2</div><div class="a t" style="left:2.30px;top:9.77px;font-size:10.2px;line-height:10.2px;font-weight:400;color:#e6e6e6;-webkit-text-stroke:0.3px #e6e6e6">3</div><div class="a t" style="left:2.30px;top:18.57px;font-size:10.2px;line-height:10.2px;font-weight:400;color:#e6e6e6;-webkit-text-stroke:0.3px #e6e6e6">0</div></div><div class="a" style="left:0;top:656.82px;width:13px;height:26.03px;overflow:hidden"><div class="a t" style="left:2.30px;top:0.97px;font-size:10.2px;line-height:10.2px;font-weight:400;color:#e6e6e6;-webkit-text-stroke:0.3px #e6e6e6">2</div><div class="a t" style="left:2.30px;top:9.77px;font-size:10.2px;line-height:10.2px;font-weight:400;color:#e6e6e6;-webkit-text-stroke:0.3px #e6e6e6">4</div><div class="a t" style="left:2.30px;top:18.57px;font-size:10.2px;line-height:10.2px;font-weight:400;color:#e6e6e6;-webkit-text-stroke:0.3px #e6e6e6">0</div></div><div class="a" style="left:0;top:683.85px;width:13px;height:26.03px;overflow:hidden"><div class="a t" style="left:2.30px;top:0.97px;font-size:10.2px;line-height:10.2px;font-weight:400;color:#e6e6e6;-webkit-text-stroke:0.3px #e6e6e6">2</div><div class="a t" style="left:2.30px;top:9.77px;font-size:10.2px;line-height:10.2px;font-weight:400;color:#e6e6e6;-webkit-text-stroke:0.3px #e6e6e6">5</div><div class="a t" style="left:2.30px;top:18.57px;font-size:10.2px;line-height:10.2px;font-weight:400;color:#e6e6e6;-webkit-text-stroke:0.3px #e6e6e6">0</div></div><div class="a" style="left:0;top:710.88px;width:13px;height:26.03px;overflow:hidden"><div class="a t" style="left:2.30px;top:0.97px;font-size:10.2px;line-height:10.2px;font-weight:400;color:#e6e6e6;-webkit-text-stroke:0.3px #e6e6e6">2</div><div class="a t" style="left:2.30px;top:9.77px;font-size:10.2px;line-height:10.2px;font-weight:400;color:#e6e6e6;-webkit-text-stroke:0.3px #e6e6e6">6</div><div class="a t" style="left:2.30px;top:18.57px;font-size:10.2px;line-height:10.2px;font-weight:400;color:#e6e6e6;-webkit-text-stroke:0.3px #e6e6e6">0</div></div><div class="a" style="left:0;top:737.91px;width:13px;height:26.03px;overflow:hidden"><div class="a t" style="left:2.30px;top:0.97px;font-size:10.2px;line-height:10.2px;font-weight:400;color:#e6e6e6;-webkit-text-stroke:0.3px #e6e6e6">2</div><div class="a t" style="left:2.30px;top:9.77px;font-size:10.2px;line-height:10.2px;font-weight:400;color:#e6e6e6;-webkit-text-stroke:0.3px #e6e6e6">7</div><div class="a t" style="left:2.30px;top:18.57px;font-size:10.2px;line-height:10.2px;font-weight:400;color:#e6e6e6;-webkit-text-stroke:0.3px #e6e6e6">0</div></div><div class="a" style="left:0;top:764.94px;width:13px;height:26.03px;overflow:hidden"><div class="a t" style="left:2.30px;top:0.97px;font-size:10.2px;line-height:10.2px;font-weight:400;color:#e6e6e6;-webkit-text-stroke:0.3px #e6e6e6">2</div><div class="a t" style="left:2.30px;top:9.77px;font-size:10.2px;line-height:10.2px;font-weight:400;color:#e6e6e6;-webkit-text-stroke:0.3px #e6e6e6">8</div><div class="a t" style="left:2.30px;top:18.57px;font-size:10.2px;line-height:10.2px;font-weight:400;color:#e6e6e6;-webkit-text-stroke:0.3px #e6e6e6">0</div></div><div class="a" style="left:0;top:791.97px;width:13px;height:26.03px;overflow:hidden"><div class="a t" style="left:2.30px;top:0.97px;font-size:10.2px;line-height:10.2px;font-weight:400;color:#e6e6e6;-webkit-text-stroke:0.3px #e6e6e6">2</div><div class="a t" style="left:2.30px;top:9.77px;font-size:10.2px;line-height:10.2px;font-weight:400;color:#e6e6e6;-webkit-text-stroke:0.3px #e6e6e6">9</div><div class="a t" style="left:2.30px;top:18.57px;font-size:10.2px;line-height:10.2px;font-weight:400;color:#e6e6e6;-webkit-text-stroke:0.3px #e6e6e6">0</div></div></div><div class="a" style="left:32px;top:118px;width:15px;height:15px;background:#1f1f1f;"></div><div class="a" style="left:32px;top:132px;width:15px;height:1px;background:#6a6a6a;"></div><svg class="a" style="left:32px;top:118px" width="14" height="15"><path d="M0 4.5H14M4.5 0V15" stroke="#9a9a9a" stroke-width="1" stroke-dasharray="1 1.2"/></svg><svg class="a" style="left:46px;top:100px" width="8" height="8"><path d="M1 1L7 7M7 1L1 7" stroke="#d0d0d0" stroke-width="1.2"/></svg><div class="a t" style="left:61.50px;top:99.75px;font-size:10.1px;line-height:10.1px;font-weight:400;color:#e8e8e8;-webkit-text-stroke:0.4px #e8e8e8;letter-spacing:0.3px">*Unbenannt-1 @ 49 % [GPU-Vorschau]</div><svg class="a" style="left:1486px;top:106px" width="20" height="4"><rect x="0.0" y="0" width="1.2" height="3.5" fill="#3a3a3a"/><rect x="2.2" y="0" width="1.2" height="3.5" fill="#3a3a3a"/><rect x="4.4" y="0" width="1.2" height="3.5" fill="#3a3a3a"/><rect x="6.6" y="0" width="1.2" height="3.5" fill="#3a3a3a"/><rect x="8.8" y="0" width="1.2" height="3.5" fill="#3a3a3a"/><rect x="11.0" y="0" width="1.2" height="3.5" fill="#3a3a3a"/><rect x="13.2" y="0" width="1.2" height="3.5" fill="#3a3a3a"/><rect x="15.4" y="0" width="1.2" height="3.5" fill="#3a3a3a"/><rect x="17.6" y="0" width="1.2" height="3.5" fill="#3a3a3a"/></svg><svg class="a" style="left:1428px;top:115.0px" width="22" height="20" viewBox="0 0 22 20"><path d="M2 4.5L4.5 2H9.2V15.5H2Z M10.8 2H15.5L18 4.5V15.5H10.8Z" fill="#c6c6c6"/><path d="M2.2 4.6H4.6V2.2Z M17.8 4.6H15.4V2.2Z" fill="#8a8a8a"/><rect x="9.4" y="-0.5" width="1.2" height="19" fill="#9a9a9a"/></svg><div class="a t" style="left:1454.00px;top:119.69px;font-size:11px;line-height:11px;font-weight:700;color:#eeeeee;letter-spacing:0.1px">Seiten</div><svg class="a" style="left:1428px;top:141.0px" width="22" height="20" viewBox="0 0 22 20"><path d="M10 1.5L17.5 6.5L10 11.5L2.5 6.5Z" fill="#c6c6c6"/><path d="M4 9.8L2.5 10.8L10 15.8L17.5 10.8L16 9.8L10 13.8Z" fill="#c6c6c6"/></svg><div class="a t" style="left:1454.00px;top:146.09px;font-size:11px;line-height:11px;font-weight:700;color:#eeeeee;letter-spacing:0.1px">Ebenen</div><svg class="a" style="left:1428px;top:168.0px" width="22" height="20" viewBox="0 0 22 20"><rect x="2.5" y="4.5" width="15" height="11" fill="none" stroke="#c6c6c6" stroke-width="1"/><rect x="3" y="5" width="4.5" height="5" fill="#c6c6c6" opacity=".8"/><rect x="12.5" y="5" width="4.5" height="5" fill="#c6c6c6" opacity=".8"/><rect x="7.5" y="10" width="5" height="5" fill="#c6c6c6" opacity=".8"/><rect x="7.5" y="5" width="5" height="5" fill="#c6c6c6" opacity=".45"/><rect x="3" y="10" width="4.5" height="5" fill="#c6c6c6" opacity=".45"/><rect x="12.5" y="10" width="4.5" height="5" fill="#c6c6c6" opacity=".45"/></svg><div class="a t" style="left:1454.00px;top:172.49px;font-size:11px;line-height:11px;font-weight:700;color:#eeeeee;letter-spacing:0.1px">Farbfelder</div><svg class="a" style="left:1428px;top:194.0px" width="22" height="20" viewBox="0 0 22 20"><path d="M3.5 15V3H15.5" fill="none" stroke="#c6c6c6" stroke-width="1"/><rect x="5.5" y="4.5" width="12" height="13" fill="none" stroke="#c6c6c6" stroke-width="1.2"/><path d="M11.5 5V9.5L13 8.3L14.5 9.5V5Z" fill="#c6c6c6"/></svg><div class="a t" style="left:1454.00px;top:198.89px;font-size:11px;line-height:11px;font-weight:700;color:#eeeeee;letter-spacing:0.1px">CC Libraries</div><div class="a" style="left:1420px;top:219px;width:152px;height:1px;background:#3c3c3c;"></div><svg class="a" style="left:1486px;top:223.3px" width="20" height="4"><rect x="0.0" y="0" width="1.2" height="3.5" fill="#3a3a3a"/><rect x="2.2" y="0" width="1.2" height="3.5" fill="#3a3a3a"/><rect x="4.4" y="0" width="1.2" height="3.5" fill="#3a3a3a"/><rect x="6.6" y="0" width="1.2" height="3.5" fill="#3a3a3a"/><rect x="8.8" y="0" width="1.2" height="3.5" fill="#3a3a3a"/><rect x="11.0" y="0" width="1.2" height="3.5" fill="#3a3a3a"/><rect x="13.2" y="0" width="1.2" height="3.5" fill="#3a3a3a"/><rect x="15.4" y="0" width="1.2" height="3.5" fill="#3a3a3a"/><rect x="17.6" y="0" width="1.2" height="3.5" fill="#3a3a3a"/></svg><svg class="a" style="left:1428px;top:232.0px" width="22" height="20" viewBox="0 0 22 20"><path d="M6.5 3.5C4 3 2.5 5 3.8 6.5C4.8 7.5 6.5 6.5 6.2 5M6.5 3.5C9 3.5 11 2.5 13 1.8C11.5 5 9 10 5.5 14.5C4.5 15.8 3 16 2.8 15M13 1.8C12.8 6 13.2 11 14.2 16.5M8 10.5H14.5M11.5 16.5H17.5" fill="none" stroke="#c6c6c6" stroke-width="1.2" stroke-linecap="round"/></svg><div class="a t" style="left:1454.00px;top:236.99px;font-size:11px;line-height:11px;font-weight:700;color:#eeeeee;letter-spacing:0.1px">Glyphen</div><svg class="a" style="left:1428px;top:259.0px" width="22" height="20" viewBox="0 0 22 20"><path d="M2 4.5H18M2 7.5H6M14 7.5H18M2 10.5H6M14 10.5H18M2 13.5H6M14 13.5H18M2 16.5H18" stroke="#c6c6c6" stroke-width="1.1"/><circle cx="10" cy="10.5" r="3.6" fill="#c6c6c6"/></svg><div class="a t" style="left:1454.00px;top:263.39px;font-size:11px;line-height:11px;font-weight:700;color:#eeeeee;letter-spacing:0.1px">Textumfluss</div><div class="a" style="left:1420px;top:283px;width:152px;height:1px;background:#3c3c3c;"></div><svg class="a" style="left:1486px;top:287.7px" width="20" height="4"><rect x="0.0" y="0" width="1.2" height="3.5" fill="#3a3a3a"/><rect x="2.2" y="0" width="1.2" height="3.5" fill="#3a3a3a"/><rect x="4.4" y="0" width="1.2" height="3.5" fill="#3a3a3a"/><rect x="6.6" y="0" width="1.2" height="3.5" fill="#3a3a3a"/><rect x="8.8" y="0" width="1.2" height="3.5" fill="#3a3a3a"/><rect x="11.0" y="0" width="1.2" height="3.5" fill="#3a3a3a"/><rect x="13.2" y="0" width="1.2" height="3.5" fill="#3a3a3a"/><rect x="15.4" y="0" width="1.2" height="3.5" fill="#3a3a3a"/><rect x="17.6" y="0" width="1.2" height="3.5" fill="#3a3a3a"/></svg><svg class="a" style="left:1428px;top:297.0px" width="22" height="20" viewBox="0 0 22 20"><rect x="2" y="5" width="16" height="1.5" fill="#c6c6c6"/><rect x="2" y="9" width="16" height="2" fill="#c6c6c6"/><rect x="2" y="13.5" width="16" height="2.6" fill="#c6c6c6"/></svg><div class="a t" style="left:1454.00px;top:301.39px;font-size:11px;line-height:11px;font-weight:700;color:#eeeeee;letter-spacing:0.1px">Kontur</div><svg class="a" style="left:1428px;top:323.0px" width="22" height="20" viewBox="0 0 22 20"><defs><linearGradient id="gv"><stop offset="0" stop-color="#111"/><stop offset="1" stop-color="#e6e6e6"/></linearGradient></defs><rect x="2.5" y="4.5" width="15" height="11" fill="url(#gv)" stroke="#c6c6c6" stroke-width="1"/></svg><div class="a t" style="left:1454.00px;top:327.79px;font-size:11px;line-height:11px;font-weight:700;color:#eeeeee;letter-spacing:0.1px">Verlauf</div><div class="a" style="left:1420px;top:349px;width:152px;height:1px;background:#3c3c3c;"></div><svg class="a" style="left:1486px;top:353.8px" width="20" height="4"><rect x="0.0" y="0" width="1.2" height="3.5" fill="#3a3a3a"/><rect x="2.2" y="0" width="1.2" height="3.5" fill="#3a3a3a"/><rect x="4.4" y="0" width="1.2" height="3.5" fill="#3a3a3a"/><rect x="6.6" y="0" width="1.2" height="3.5" fill="#3a3a3a"/><rect x="8.8" y="0" width="1.2" height="3.5" fill="#3a3a3a"/><rect x="11.0" y="0" width="1.2" height="3.5" fill="#3a3a3a"/><rect x="13.2" y="0" width="1.2" height="3.5" fill="#3a3a3a"/><rect x="15.4" y="0" width="1.2" height="3.5" fill="#3a3a3a"/><rect x="17.6" y="0" width="1.2" height="3.5" fill="#3a3a3a"/></svg><svg class="a" style="left:1428px;top:363.0px" width="22" height="20" viewBox="0 0 22 20"><rect x="3" y="2" width="14.5" height="16.5" fill="#c6c6c6"/><path d="M5 4.5H10M7.5 4.5V8M11 6.5H15.5M5 9.5H15.5M5 12.5H15.5M5 15.5H15.5" stroke="#4a4a4a" stroke-width="1.2"/></svg><div class="a t" style="left:1454.00px;top:367.49px;font-size:11px;line-height:11px;font-weight:700;color:#eeeeee;letter-spacing:0.1px">Textabschnitt</div><svg class="a" style="left:1428px;top:389.0px" width="22" height="20" viewBox="0 0 22 20"><circle cx="7.5" cy="7.5" r="6" fill="#c6c6c6"/><path d="M4 5C6 6 6 8 4.5 10M9 2.5C8 5 10 6 12 5.5M7 13C8 11 10 11 11 12" stroke="#535353" stroke-width="1" fill="none"/><path d="M10 11V17.5H17V12.5C17 11.5 15.5 11.5 15.5 12.5V11.2C15.5 10.2 14 10.2 14 11.2V10.8C14 9.8 12.5 9.8 12.5 10.8V7C12.5 6 11 6 11 7V13Z" fill="#c6c6c6" stroke="#535353" stroke-width=".8"/></svg><div class="a t" style="left:1454.00px;top:393.89px;font-size:11px;line-height:11px;font-weight:700;color:#eeeeee;letter-spacing:0.1px">Hyperlinks</div><svg class="a" style="left:1428px;top:416.0px" width="22" height="20" viewBox="0 0 22 20"><text x="2" y="15" font-family="Liberation Serif" font-style="italic" font-size="15" fill="#c6c6c6">fx</text></svg><div class="a t" style="left:1454.00px;top:420.29px;font-size:11px;line-height:11px;font-weight:700;color:#eeeeee;letter-spacing:0.1px">Effekte</div><div class="a" style="left:1420px;top:441px;width:152px;height:1px;background:#3c3c3c;"></div><svg class="a" style="left:1486px;top:445.8px" width="20" height="4"><rect x="0.0" y="0" width="1.2" height="3.5" fill="#3a3a3a"/><rect x="2.2" y="0" width="1.2" height="3.5" fill="#3a3a3a"/><rect x="4.4" y="0" width="1.2" height="3.5" fill="#3a3a3a"/><rect x="6.6" y="0" width="1.2" height="3.5" fill="#3a3a3a"/><rect x="8.8" y="0" width="1.2" height="3.5" fill="#3a3a3a"/><rect x="11.0" y="0" width="1.2" height="3.5" fill="#3a3a3a"/><rect x="13.2" y="0" width="1.2" height="3.5" fill="#3a3a3a"/><rect x="15.4" y="0" width="1.2" height="3.5" fill="#3a3a3a"/><rect x="17.6" y="0" width="1.2" height="3.5" fill="#3a3a3a"/></svg><svg class="a" style="left:1428px;top:455.0px" width="22" height="20" viewBox="0 0 22 20"><path d="M12.5 3V17M15.5 3V17" stroke="#c6c6c6" stroke-width="1.4"/><path d="M16 3H9.5C6.5 3 5.5 5 5.5 7C5.5 9 6.5 11 9.5 11H12.5" fill="#c6c6c6"/></svg><div class="a t" style="left:1454.00px;top:459.49px;font-size:11px;line-height:11px;font-weight:700;color:#eeeeee;letter-spacing:0.1px">Absatz</div><svg class="a" style="left:1428px;top:481.0px" width="22" height="20" viewBox="0 0 22 20"><path d="M13.5 2V14M16.5 2V14" stroke="#c6c6c6" stroke-width="1.3"/><path d="M17 2H11.5C9 2 8 3.5 8 5.5C8 7.5 9 9 11.5 9H13.5" fill="#c6c6c6"/><rect x="2.5" y="11.5" width="5" height="4.5" fill="none" stroke="#c6c6c6" stroke-width="1"/><rect x="5" y="14" width="5" height="4.5" fill="#535353" stroke="#c6c6c6" stroke-width="1"/></svg><div class="a t" style="left:1454.00px;top:485.89px;font-size:11px;line-height:11px;font-weight:700;color:#eeeeee;letter-spacing:0.1px">Absatzformate</div><div class="a" style="left:1420px;top:506px;width:152px;height:1px;background:#3c3c3c;"></div><svg class="a" style="left:1486px;top:510.5px" width="20" height="4"><rect x="0.0" y="0" width="1.2" height="3.5" fill="#3a3a3a"/><rect x="2.2" y="0" width="1.2" height="3.5" fill="#3a3a3a"/><rect x="4.4" y="0" width="1.2" height="3.5" fill="#3a3a3a"/><rect x="6.6" y="0" width="1.2" height="3.5" fill="#3a3a3a"/><rect x="8.8" y="0" width="1.2" height="3.5" fill="#3a3a3a"/><rect x="11.0" y="0" width="1.2" height="3.5" fill="#3a3a3a"/><rect x="13.2" y="0" width="1.2" height="3.5" fill="#3a3a3a"/><rect x="15.4" y="0" width="1.2" height="3.5" fill="#3a3a3a"/><rect x="17.6" y="0" width="1.2" height="3.5" fill="#3a3a3a"/></svg><svg class="a" style="left:1428px;top:520.0px" width="22" height="20" viewBox="0 0 22 20"><text x="2" y="16" font-family="Liberation Sans" font-size="15" fill="#c6c6c6">A</text><rect x="14.5" y="2.5" width="1" height="15" fill="#c6c6c6"/></svg><div class="a t" style="left:1454.00px;top:524.19px;font-size:11px;line-height:11px;font-weight:700;color:#eeeeee;letter-spacing:0.1px">Zeichen</div><svg class="a" style="left:1428px;top:546.0px" width="22" height="20" viewBox="0 0 22 20"><text x="8" y="12" font-family="Liberation Sans" font-size="13" fill="#c6c6c6">A</text><rect x="2.5" y="11.5" width="5" height="4.5" fill="none" stroke="#c6c6c6" stroke-width="1"/><rect x="5" y="14" width="5" height="4.5" fill="#535353" stroke="#c6c6c6" stroke-width="1"/></svg><div class="a t" style="left:1454.00px;top:550.59px;font-size:11px;line-height:11px;font-weight:700;color:#eeeeee;letter-spacing:0.1px">Zeichenformate</div><div class="a" style="left:1420px;top:571px;width:152px;height:1px;background:#3c3c3c;"></div><svg class="a" style="left:1561px;top:93px" width="10" height="7"><path d="M3.5 1L1.5 3.3L3.5 5.6M7.5 1L5.5 3.3L7.5 5.6" stroke="#a0a0a0" stroke-width="1" fill="none"/></svg><svg class="a" style="left:0;top:0" width="1572" height="932"><rect x="499.5" y="259.5" width="300" height="258" fill="none" stroke="#a9bde3" stroke-width="1"/><path d="M499.5 259.5L799.5 517.5M799.5 259.5L499.5 517.5" stroke="#a9bde3" stroke-width="1"/><rect x="497.0" y="257.0" width="5" height="5" fill="#fff" stroke="#a9bde3" stroke-width="1"/><rect x="647.0" y="257.0" width="5" height="5" fill="#fff" stroke="#a9bde3" stroke-width="1"/><rect x="797.0" y="257.0" width="5" height="5" fill="#fff" stroke="#a9bde3" stroke-width="1"/><rect x="497.0" y="386.0" width="5" height="5" fill="#fff" stroke="#a9bde3" stroke-width="1"/><rect x="497.0" y="515.0" width="5" height="5" fill="#fff" stroke="#a9bde3" stroke-width="1"/><rect x="647.0" y="515.0" width="5" height="5" fill="#fff" stroke="#a9bde3" stroke-width="1"/><rect x="797.0" y="515.0" width="5" height="5" fill="#fff" stroke="#a9bde3" stroke-width="1"/><rect x="797.0" y="386.0" width="5" height="5" fill="#fff" stroke="#a9bde3" stroke-width="1"/><rect x="735.8" y="256" width="7" height="7" fill="#5b8ff0"/><rect x="796.5" y="278.8" width="6" height="6.5" fill="#f4e04c" stroke="#a8aa9a" stroke-width="1"/></svg><div class="a" style="left:640px;top:348px;width:259px;height:620px;background:#e6e6e6;border:1px solid #c6c6c6;border-radius:7px;box-shadow:0 5px 18px rgba(0,0,0,.22),0 0 2px rgba(0,0,0,.08)"></div><div class="a" style="left:654px;top:483px;width:231px;height:1px;background:#cdcdcd;"></div><div class="a" style="left:654px;top:514px;width:231px;height:1px;background:#cdcdcd;"></div><div class="a" style="left:654px;top:566px;width:231px;height:1px;background:#cdcdcd;"></div><div class="a" style="left:654px;top:639px;width:231px;height:1px;background:#cdcdcd;"></div><div class="a" style="left:654px;top:691px;width:231px;height:1px;background:#cdcdcd;"></div><div class="a" style="left:654px;top:846px;width:231px;height:1px;background:#cdcdcd;"></div><div class="a" style="left:654px;top:898px;width:231px;height:1px;background:#cdcdcd;"></div><div class="a" style="left:654px;top:929px;width:231px;height:1px;background:#cdcdcd;"></div><div class="a" style="left:645.5px;top:416.5px;width:247.5px;height:20.5px;background:#5f95ee;border-radius:4px"></div><div class="a t" style="left:654.00px;top:359.13px;font-size:12.6px;line-height:12.6px;font-weight:400;color:#262626;letter-spacing:0.15px">Ausschneiden</div><div class="a t" style="right:687.5px;top:359.30px;font-size:12.4px;line-height:12.4px;color:#a6a6a6"><span style="font-size:11px;margin-left:0px">⌘</span><span style="font-size:12.4px;margin-left:2.6px">X</span></div><div class="a t" style="left:654.00px;top:379.93px;font-size:12.6px;line-height:12.6px;font-weight:400;color:#262626;letter-spacing:0.15px">Kopieren</div><div class="a t" style="right:687.5px;top:380.10px;font-size:12.4px;line-height:12.4px;color:#a6a6a6"><span style="font-size:11px;margin-left:0px">⌘</span><span style="font-size:12.4px;margin-left:2.6px">C</span></div><div class="a t" style="left:654.00px;top:400.73px;font-size:12.6px;line-height:12.6px;font-weight:400;color:#262626;letter-spacing:0.15px">Einfügen</div><div class="a t" style="right:687.5px;top:400.90px;font-size:12.4px;line-height:12.4px;color:#a6a6a6"><span style="font-size:11px;margin-left:0px">⌘</span><span style="font-size:12.4px;margin-left:2.6px">V</span></div><div class="a t" style="left:654.00px;top:421.53px;font-size:12.6px;line-height:12.6px;font-weight:400;color:#ffffff;letter-spacing:0.15px">In die Auswahl einfügen</div><div class="a t" style="right:687.5px;top:421.70px;font-size:12.4px;line-height:12.4px;color:#ffffff"><span style="font-size:11px;margin-left:0px">⌥</span><span style="font-size:11px;margin-left:2.6px">⌘</span><span style="font-size:12.4px;margin-left:2.6px">V</span></div><div class="a t" style="left:654.00px;top:442.33px;font-size:12.6px;line-height:12.6px;font-weight:400;color:#262626;letter-spacing:0.15px">An Originalposition einfügen</div><div class="a t" style="right:687.5px;top:442.50px;font-size:12.4px;line-height:12.4px;color:#a6a6a6"><span style="font-size:11px;margin-left:0px">⌥</span><span style="font-size:11px;margin-left:2.6px">⇧</span><span style="font-size:11px;margin-left:2.6px">⌘</span><span style="font-size:12.4px;margin-left:2.6px">V</span></div><div class="a t" style="left:654.00px;top:463.13px;font-size:12.6px;line-height:12.6px;font-weight:400;color:#262626;letter-spacing:0.15px">Adobe Stock durchsuchen...</div><div class="a t" style="left:654.00px;top:494.23px;font-size:12.6px;line-height:12.6px;font-weight:400;color:#262626;letter-spacing:0.15px">Zoomen</div><svg class="a" style="left:877px;top:494.3px" width="8" height="11"><path d="M1.6 1.3L5.8 5.2L1.6 9.1" stroke="#2e2e2e" stroke-width="1.7" fill="none"/></svg><div class="a t" style="left:654.00px;top:525.13px;font-size:12.6px;line-height:12.6px;font-weight:400;color:#262626;letter-spacing:0.15px">Transformieren</div><svg class="a" style="left:877px;top:525.2px" width="8" height="11"><path d="M1.6 1.3L5.8 5.2L1.6 9.1" stroke="#2e2e2e" stroke-width="1.7" fill="none"/></svg><div class="a t" style="left:654.00px;top:545.93px;font-size:12.6px;line-height:12.6px;font-weight:400;color:#262626;letter-spacing:0.15px">Auswählen</div><svg class="a" style="left:877px;top:546.0px" width="8" height="11"><path d="M1.6 1.3L5.8 5.2L1.6 9.1" stroke="#2e2e2e" stroke-width="1.7" fill="none"/></svg><div class="a t" style="left:654.00px;top:577.13px;font-size:12.6px;line-height:12.6px;font-weight:400;color:#262626;letter-spacing:0.15px">Sperren</div><div class="a t" style="right:687.5px;top:577.30px;font-size:12.4px;line-height:12.4px;color:#a6a6a6"><span style="font-size:11px;margin-left:0px">⌘</span><span style="font-size:12.4px;margin-left:2.6px">L</span></div><div class="a t" style="left:654.00px;top:597.93px;font-size:12.6px;line-height:12.6px;font-weight:400;color:#262626;letter-spacing:0.15px">Ausblenden</div><div class="a t" style="right:687.5px;top:598.10px;font-size:12.4px;line-height:12.4px;color:#a6a6a6"><span style="font-size:11px;margin-left:0px">⌘</span><span style="font-size:12.4px;margin-left:2.6px">3</span></div><div class="a t" style="left:654.00px;top:618.73px;font-size:12.6px;line-height:12.6px;font-weight:400;color:#262626;letter-spacing:0.15px">Konturstärke</div><svg class="a" style="left:877px;top:618.8px" width="8" height="11"><path d="M1.6 1.3L5.8 5.2L1.6 9.1" stroke="#2e2e2e" stroke-width="1.7" fill="none"/></svg><div class="a t" style="left:654.00px;top:649.73px;font-size:12.6px;line-height:12.6px;font-weight:400;color:#262626;letter-spacing:0.15px">Anpassen</div><svg class="a" style="left:877px;top:649.8px" width="8" height="11"><path d="M1.6 1.3L5.8 5.2L1.6 9.1" stroke="#2e2e2e" stroke-width="1.7" fill="none"/></svg><div class="a t" style="left:654.00px;top:670.53px;font-size:12.6px;line-height:12.6px;font-weight:400;color:#262626;letter-spacing:0.15px">Inhalt</div><svg class="a" style="left:877px;top:670.6px" width="8" height="11"><path d="M1.6 1.3L5.8 5.2L1.6 9.1" stroke="#2e2e2e" stroke-width="1.7" fill="none"/></svg><div class="a t" style="left:654.00px;top:701.53px;font-size:12.6px;line-height:12.6px;font-weight:400;color:#262626;letter-spacing:0.15px">Effekte</div><svg class="a" style="left:877px;top:701.6px" width="8" height="11"><path d="M1.6 1.3L5.8 5.2L1.6 9.1" stroke="#2e2e2e" stroke-width="1.7" fill="none"/></svg><div class="a t" style="left:654.00px;top:722.33px;font-size:12.6px;line-height:12.6px;font-weight:400;color:#262626;letter-spacing:0.15px">Beschriftungen</div><svg class="a" style="left:877px;top:722.4px" width="8" height="11"><path d="M1.6 1.3L5.8 5.2L1.6 9.1" stroke="#2e2e2e" stroke-width="1.7" fill="none"/></svg><div class="a t" style="left:654.00px;top:743.13px;font-size:12.6px;line-height:12.6px;font-weight:400;color:#262626;letter-spacing:0.15px">Aus Bild extrahieren</div><svg class="a" style="left:877px;top:743.2px" width="8" height="11"><path d="M1.6 1.3L5.8 5.2L1.6 9.1" stroke="#2e2e2e" stroke-width="1.7" fill="none"/></svg><div class="a t" style="left:654.00px;top:763.93px;font-size:12.6px;line-height:12.6px;font-weight:400;color:#262626;letter-spacing:0.15px">Hyperlinks</div><svg class="a" style="left:877px;top:764.0px" width="8" height="11"><path d="M1.6 1.3L5.8 5.2L1.6 9.1" stroke="#2e2e2e" stroke-width="1.7" fill="none"/></svg><div class="a t" style="left:654.00px;top:784.73px;font-size:12.6px;line-height:12.6px;font-weight:400;color:#262626;letter-spacing:0.15px">Interaktiv</div><svg class="a" style="left:877px;top:784.8px" width="8" height="11"><path d="M1.6 1.3L5.8 5.2L1.6 9.1" stroke="#2e2e2e" stroke-width="1.7" fill="none"/></svg><div class="a t" style="left:654.00px;top:805.53px;font-size:12.6px;line-height:12.6px;font-weight:400;color:#262626;letter-spacing:0.15px">Objektexportoptionen...</div><div class="a t" style="left:654.00px;top:826.33px;font-size:12.6px;line-height:12.6px;font-weight:400;color:#262626;letter-spacing:0.15px">QR-Code generieren...</div><div class="a t" style="left:654.00px;top:857.33px;font-size:12.6px;line-height:12.6px;font-weight:400;color:#262626;letter-spacing:0.15px">Tag für Rahmen</div><svg class="a" style="left:877px;top:857.4px" width="8" height="11"><path d="M1.6 1.3L5.8 5.2L1.6 9.1" stroke="#2e2e2e" stroke-width="1.7" fill="none"/></svg><div class="a t" style="left:654.00px;top:878.13px;font-size:12.6px;line-height:12.6px;font-weight:400;color:#262626;letter-spacing:0.15px">Tags automatisch erstellen</div><div class="a t" style="left:654.00px;top:909.13px;font-size:12.6px;line-height:12.6px;font-weight:400;color:#262626;letter-spacing:0.15px">Anzeigeleistung</div><svg class="a" style="left:877px;top:909.2px" width="8" height="11"><path d="M1.6 1.3L5.8 5.2L1.6 9.1" stroke="#2e2e2e" stroke-width="1.7" fill="none"/></svg><svg class="a" style="left:813px;top:423px" width="14" height="20" viewBox="0 0 14 20"><path d="M1 1V15.5L4.5 12.2L7 18L9.3 17L6.9 11.4H11.5Z" fill="#111" stroke="#fff" stroke-width="1.2"/></svg><svg class="a" style="left:0;top:0" width="32" height="932"><rect x="0" y="96" width="1.2" height="1.2" fill="#8a8a8a"/><path d="M2.3 94.3L4.3 96.6L2.3 98.9" stroke="#a0a0a0" stroke-width="1.1" fill="none"/><rect x="2.0" y="105.5" width="1.1" height="3.5" fill="#3a3a3a"/><rect x="4.2" y="105.5" width="1.1" height="3.5" fill="#3a3a3a"/><rect x="6.4" y="105.5" width="1.1" height="3.5" fill="#3a3a3a"/><rect x="8.6" y="105.5" width="1.1" height="3.5" fill="#3a3a3a"/><rect x="10.8" y="105.5" width="1.1" height="3.5" fill="#3a3a3a"/><rect x="13.0" y="105.5" width="1.1" height="3.5" fill="#3a3a3a"/><rect x="15.2" y="105.5" width="1.1" height="3.5" fill="#3a3a3a"/><rect x="17.4" y="105.5" width="1.1" height="3.5" fill="#3a3a3a"/><rect x="19.6" y="105.5" width="1.1" height="3.5" fill="#3a3a3a"/><rect x="-5" y="117" width="29.5" height="20" rx="3" fill="#303030"/><path d="M7.5 120V134.5L10.5 130.5L17.5 128.5Z" fill="none" stroke="#c9c9c9" stroke-width="1.1" stroke-linejoin="round"/><path d="M7 142V158L10.5 153L18 151Z" fill="#c9c9c9"/><path d="M6.5 165H12.5L16 168.5V172M16 178.5H6.5V165M12.5 165V168.5H16" fill="none" stroke="#c9c9c9" stroke-width="1"/><path d="M14.5 171.5V179L16.5 177L20 176Z" fill="#c9c9c9"/><rect x="3" y="188" width="1.6" height="13" fill="#c9c9c9"/><rect x="18.4" y="188" width="1.6" height="13" fill="#c9c9c9"/><path d="M6 194.5H17" stroke="#c9c9c9" stroke-width="1.2"/><path d="M5.5 194.5L8.5 191.5V197.5Z M17.5 194.5L14.5 191.5V197.5Z" fill="#c9c9c9"/><path d="M5.5 215V224.5H17.5V215" fill="none" stroke="#c9c9c9" stroke-width="1.6"/><rect x="8" y="218.5" width="7" height="1.6" fill="#c9c9c9"/><rect x="8" y="221" width="1.6" height="1.4" fill="#c9c9c9"/><rect x="10.7" y="221" width="1.6" height="1.4" fill="#c9c9c9"/><rect x="13.4" y="221" width="1.6" height="1.4" fill="#c9c9c9"/><path d="M7 210L11 214" stroke="#c9c9c9" stroke-width="1.4"/><path d="M12.5 215.5V211.5L8.5 215.5Z" fill="#c9c9c9"/><path d="M20 226H24V222Z" fill="#c9c9c9"/><rect x="0" y="229" width="30" height="1" fill="#4a4a4a"/><path d="M5.5 236.5H18M5.8 236V239.5M17.7 236V239.5M11.7 236.5V249M9 249H14.5" stroke="#c9c9c9" stroke-width="1.5" fill="none"/><path d="M20 252H24V248Z" fill="#c9c9c9"/><path d="M5.5 271.5L18 259" stroke="#c9c9c9" stroke-width="1.3"/><path d="M14.5 281L19 285.5L16.5 288L12 283.5Z" fill="#c9c9c9"/><path d="M11.5 284L16 288.5L14 293L5 295.5L7.5 286.5Z" fill="#c9c9c9"/><path d="M5 295.5L9.8 290.7" stroke="#535353" stroke-width="1"/><circle cx="10.5" cy="289.8" r="1" fill="#535353"/><path d="M20 298H24V294Z" fill="#c9c9c9"/><path d="M15 303.5L19 307.5L17.5 309L13.5 305Z" fill="#c9c9c9"/><path d="M12.8 305.8L16.8 309.8L8.5 318L4.5 318.5L5 314.5Z" fill="#c9c9c9"/><path d="M20 321H24V317Z" fill="#c9c9c9"/><rect x="4.5" y="327.5" width="14" height="12.5" fill="none" stroke="#c9c9c9" stroke-width="1.3"/><path d="M4.5 327.5L18.5 340M18.5 327.5L4.5 340" stroke="#c9c9c9" stroke-width="1"/><path d="M20 343H24V339Z" fill="#c9c9c9"/><rect x="4.5" y="349.5" width="14" height="12.5" fill="#6a6a6a" stroke="#c9c9c9" stroke-width="1.3"/><path d="M20 365H24V361Z" fill="#c9c9c9"/><rect x="0" y="368" width="30" height="1" fill="#4a4a4a"/><rect x="0" y="461.5" width="30" height="1" fill="#4a4a4a"/><circle cx="17" cy="376.5" r="2.5" fill="none" stroke="#c9c9c9" stroke-width="1.2"/><circle cx="17" cy="386.5" r="2.5" fill="none" stroke="#c9c9c9" stroke-width="1.2"/><path d="M4.5 376L15 384.5M4.5 387L15 378.5" stroke="#c9c9c9" stroke-width="1.5"/><path d="M3 396V410L8.5 403Z" fill="#c9c9c9"/><rect x="9" y="398" width="11.5" height="10.5" fill="none" stroke="#c9c9c9" stroke-width="0.9" stroke-dasharray="1.5 1"/><path d="M20 412H24V408Z" fill="#c9c9c9"/><defs><linearGradient id="tg"><stop offset="0" stop-color="#1a1a1a"/><stop offset="1" stop-color="#dcdcdc"/></linearGradient><pattern id="ck" width="4" height="4" patternUnits="userSpaceOnUse"><rect width="4" height="4" fill="#2a2a2a"/><rect width="2" height="2" fill="#555"/><rect x="2" y="2" width="2" height="2" fill="#555"/></pattern><linearGradient id="fg" x1="0" y1="0" x2="0" y2="1"><stop offset="0" stop-color="#777" stop-opacity=".6"/><stop offset="1" stop-color="#000" stop-opacity=".5"/></linearGradient></defs><rect x="4.5" y="420" width="14.5" height="13" fill="url(#tg)" stroke="#c9c9c9" stroke-width="1"/><rect x="4.5" y="443" width="14.5" height="12.5" fill="url(#ck)" stroke="#c9c9c9" stroke-width="1"/><rect x="5" y="443.5" width="13.5" height="11.5" fill="url(#fg)"/><path d="M5 468H18V478L15 481.3H5Z" fill="#c9c9c9"/><path d="M7.5 471.5H15.5M7.5 474H15.5M7.5 476.5H12.5" stroke="#535353" stroke-width="1"/><path d="M15 481.3V478.5H18" fill="#535353"/><path d="M17.5 490.5C19 489 21 491 19.5 492.5L18 494L19 495L17.5 496.5L12.5 491.5L14 490L15 491Z" fill="#c9c9c9"/><path d="M13.5 493L16 495.5L7.5 504L4.5 505L5.5 502Z" fill="none" stroke="#c9c9c9" stroke-width="1.1"/><rect x="11" y="501.5" width="10" height="4" fill="#535353" stroke="#c9c9c9" stroke-width="1"/><rect x="12.5" y="502.7" width="1.8" height="1.6" fill="#c9c9c9"/><rect x="15.2" y="502.7" width="1.8" height="1.6" fill="#c9c9c9"/><rect x="17.9" y="502.7" width="1.8" height="1.6" fill="#c9c9c9"/><path d="M21 507H25V503Z" fill="#c9c9c9"/><path d="M6 519C5 517.5 3.5 518.5 4.5 520L8 525.5C9 527 10 527.8 12 527.8H14C16.5 527.8 17.5 526 17.5 523.5V516.5C17.5 515.3 16 515.3 16 516.5V520H15.5V514C15.5 512.8 14 512.8 14 514V519.5H13.5V512.8C13.5 511.5 12 511.5 12 512.8V519.5H11.5V514C11.5 512.8 10 512.8 10 514V522L8.5 520.5Z" fill="#c9c9c9"/><circle cx="10" cy="541" r="5" fill="none" stroke="#c9c9c9" stroke-width="1.3"/><path d="M13.5 544.5L18.5 549.5" stroke="#c9c9c9" stroke-width="1.8"/><rect x="3" y="561" width="6" height="6.5" fill="#111" stroke="#c9c9c9" stroke-width="1"/><rect x="0" y="558" width="6" height="6" fill="#fff" stroke="#111" stroke-width="0.8"/><path d="M0.5 563.5L5.5 558.5" stroke="#d22" stroke-width="0.8"/><path d="M17.5 562.5H19.5C21.5 562.5 22.5 563.5 22.5 565.5V568" fill="none" stroke="#c9c9c9" stroke-width="1.6"/><path d="M15 562.5L18.3 559.5V565.5Z M22.5 571.5L19.5 568H25.5Z" fill="#c9c9c9"/><rect x="7" y="584" width="18.5" height="18.5" fill="#fff"/><rect x="11" y="588" width="10.5" height="10.5" fill="#4a4a4a"/><path d="M8.5 600.5L23.5 585.5" stroke="#d81010" stroke-width="2.2"/><rect x="-1" y="575" width="17.5" height="17.5" fill="#fff" stroke="#3a3a3a" stroke-width="0.6"/><path d="M0.5 591.5L15.5 576" stroke="#d81010" stroke-width="2.2"/><rect x="0" y="608.5" width="11" height="12.5" rx="2" fill="#3a3a3a"/><rect x="2.5" y="611" width="6" height="7.5" fill="#666" stroke="#c9c9c9" stroke-width="1"/><text x="15.5" y="620.5" font-family="Liberation Serif" font-size="12" fill="#8a8a8a">T</text><rect x="-5" y="628" width="29.5" height="20" rx="3" fill="#3a3a3a"/><rect x="4" y="631" width="14.5" height="13" fill="#fff" stroke="#888" stroke-width="0.8"/><path d="M4.5 643.5L18 631.5" stroke="#e11" stroke-width="1.5"/><path d="M21 647H25V643Z" fill="#c9c9c9"/><rect x="8.5" y="663" width="9.5" height="7" fill="#c9c9c9"/><path d="M6 659.5V670M9.5 660V662M12 660V662M14.5 660V662M17 660V662" stroke="#c9c9c9" stroke-width="0.9" stroke-dasharray="1 1"/><rect x="-5" y="678" width="29.5" height="25" rx="3" fill="#3a3a3a"/><rect x="7" y="682" width="10.5" height="13" fill="#c9c9c9"/><rect x="8.5" y="684" width="7.5" height="8" fill="#777"/><path d="M10 686.5L13.5 690M13.5 687.5V690H11" stroke="#c9c9c9" stroke-width="1" fill="none"/><path d="M21 702H25V698Z" fill="#c9c9c9"/></svg><svg class="a" style="left:0;top:0" width="1572" height="34"><circle cx="7" cy="16.3" r="6" fill="#ed6a5e"/><circle cx="7" cy="16.3" r="2" fill="#7e1a0f"/><circle cx="25.7" cy="16.3" r="6" fill="#f5bf4f"/><circle cx="44.5" cy="16.3" r="6" fill="#61c454"/><path d="M75.3 9.8L84 17.3H81.6V24.2H78V19.5H72.6V24.2H69V17.3H66.6Z" fill="#c6c6c6"/><path d="M1303.5 13.8H1300V23.5H1313.5V13.8H1310" fill="none" stroke="#c6c6c6" stroke-width="1.5"/><path d="M1306.8 19.5V9M1303.5 12L1306.8 8.7L1310 12" fill="none" stroke="#c6c6c6" stroke-width="1.5"/><circle cx="1315.5" cy="11" r="2.6" fill="#3f8cf2"/><rect x="1327" y="7.5" width="1" height="18" fill="#444"/><path d="M1411.5 15.5L1414.7 18.7L1418 15.5" fill="none" stroke="#d0d0d0" stroke-width="1.4"/><rect x="1433" y="7.5" width="1" height="18" fill="#444"/><rect x="1439" y="8" width="121.5" height="17.5" rx="3" fill="#474747" stroke="#6d6d6d" stroke-width="1"/><circle cx="1449.8" cy="14.8" r="3.6" fill="none" stroke="#3f7fd8" stroke-width="1.3"/><path d="M1447.3 17.4L1443.8 20.9" stroke="#3f7fd8" stroke-width="1.6"/><path d="M1453.5 18L1457.5 18L1455.5 20.2Z" fill="#3f7fd8"/></svg><div class="a t" style="left:603.00px;top:8.47px;font-size:12.2px;line-height:12.2px;font-weight:400;color:#dedede;-webkit-text-stroke:0.45px #dedede">Adobe InDesign 2022</div><div class="a t" style="left:1340.00px;top:9.89px;font-size:12.3px;line-height:12.3px;font-weight:700;color:#e6e6e6;">Typografie</div><div class="a t" style="left:1463.50px;top:11.45px;font-size:10.1px;line-height:10.1px;font-weight:400;color:#8e8e8e;-webkit-text-stroke:0.25px #8e8e8e">Adobe Stock</div><svg class="a" style="left:0;top:34px" width="1572" height="56" viewBox="0 34 1572 56"><rect x="18.8" y="50.0" width="6" height="6" fill="#f0f0f0"/><rect x="19.3" y="59.0" width="5" height="5" rx="1" fill="none" stroke="#bdbdbd" stroke-width="1"/><rect x="19.3" y="67.5" width="5" height="5" rx="1" fill="none" stroke="#bdbdbd" stroke-width="1"/><rect x="27.8" y="50.5" width="5" height="5" rx="1" fill="none" stroke="#bdbdbd" stroke-width="1"/><rect x="27.8" y="59.0" width="5" height="5" rx="1" fill="none" stroke="#bdbdbd" stroke-width="1"/><rect x="27.8" y="67.5" width="5" height="5" rx="1" fill="none" stroke="#bdbdbd" stroke-width="1"/><rect x="36.3" y="50.5" width="5" height="5" rx="1" fill="none" stroke="#bdbdbd" stroke-width="1"/><rect x="36.3" y="59.0" width="5" height="5" rx="1" fill="none" stroke="#bdbdbd" stroke-width="1"/><rect x="36.3" y="67.5" width="5" height="5" rx="1" fill="none" stroke="#bdbdbd" stroke-width="1"/><path d="M24.8 53H27.3M33.3 53H35.8M21.8 56V58.5M30.3 56V58.5M38.8 56V58.5M24.8 61.5H27.3M33.3 61.5H35.8M21.8 64.5V67M30.3 64.5V67M38.8 64.5V67M24.8 70H27.3M33.3 70H35.8" stroke="#bdbdbd" stroke-width="1"/><rect x="66.5" y="40.5" width="81" height="19" rx="2.5" fill="#434343" stroke="#696969" stroke-width="1"/><rect x="82.5" y="41" width="1" height="18" fill="#696969"/><path d="M71.3 45.8L74.5 43.0L77.7 45.8M71.3 53.2L74.5 56.0L77.7 53.2" fill="none" stroke="#c8c8c8" stroke-width="1.1"/><rect x="66.5" y="65.5" width="81" height="18.5" rx="2.5" fill="#434343" stroke="#696969" stroke-width="1"/><rect x="82.5" y="66" width="1" height="17.5" fill="#696969"/><path d="M71.3 70.55L74.5 67.75L77.7 70.55M71.3 77.95L74.5 80.75L77.7 77.95" fill="none" stroke="#c8c8c8" stroke-width="1.1"/><rect x="173.5" y="40.5" width="80.5" height="19" rx="2.5" fill="#434343" stroke="#696969" stroke-width="1"/><rect x="189.5" y="41" width="1" height="18" fill="#696969"/><path d="M178.3 45.8L181.5 43.0L184.7 45.8M178.3 53.2L181.5 56.0L184.7 53.2" fill="none" stroke="#c8c8c8" stroke-width="1.1"/><rect x="173.5" y="65.5" width="80.5" height="18.5" rx="2.5" fill="#434343" stroke="#696969" stroke-width="1"/><rect x="189.5" y="66" width="1" height="17.5" fill="#696969"/><path d="M178.3 70.55L181.5 67.75L184.7 70.55M178.3 77.95L181.5 80.75L184.7 77.95" fill="none" stroke="#c8c8c8" stroke-width="1.1"/><rect x="268" y="54.5" width="4.5" height="7" rx="2.25" fill="none" stroke="#c8c8c8" stroke-width="1.1" transform="rotate(-25 270.25 58)"/><rect x="269.3" y="60.5" width="4.5" height="7" rx="2.25" fill="none" stroke="#c8c8c8" stroke-width="1.1" transform="rotate(-25 271.55 64)"/><path d="M265 56L276.5 67.5" stroke="#535353" stroke-width="2.4"/><path d="M265 56L276.5 67.5" stroke="#c8c8c8" stroke-width="1.1"/><rect x="286" y="40" width="1" height="45" fill="#4c4c4c"/><path d="M294.5 57V44.5H307.5" fill="none" stroke="#c8c8c8" stroke-width="1.2"/><path d="M307.5 44.5V57H294.5" fill="none" stroke="#c8c8c8" stroke-width="0.9" stroke-dasharray="1 1"/><path d="M297 50.5H303.5" stroke="#c8c8c8" stroke-width="1.6"/><path d="M303 47.5L306 50.5L303 53.5Z" fill="#c8c8c8"/><path d="M294.5 82V68.5H307.5" fill="none" stroke="#c8c8c8" stroke-width="1.2"/><path d="M307.5 68.5V82H294.5" fill="none" stroke="#c8c8c8" stroke-width="0.9" stroke-dasharray="1 1"/><path d="M301 70.5V77.5" stroke="#c8c8c8" stroke-width="1.6"/><path d="M298 77L301 80.5L304 77Z" fill="#c8c8c8"/><rect x="312.5" y="40.5" width="81" height="19" rx="2.5" fill="#434343" stroke="#696969" stroke-width="1"/><rect x="328.5" y="41" width="1" height="18" fill="#696969"/><path d="M317.3 45.8L320.5 43.0L323.7 45.8M317.3 53.2L320.5 56.0L323.7 53.2" fill="none" stroke="#c8c8c8" stroke-width="1.1"/><rect x="376.5" y="41" width="1" height="18" fill="#696969"/><path d="M381.75 48.5L385.25 52.0L388.75 48.5" fill="none" stroke="#c8c8c8" stroke-width="1.2"/><rect x="312.5" y="65.5" width="81" height="18.5" rx="2.5" fill="#434343" stroke="#696969" stroke-width="1"/><rect x="328.5" y="66" width="1" height="17.5" fill="#696969"/><path d="M317.3 70.55L320.5 67.75L323.7 70.55M317.3 77.95L320.5 80.75L323.7 77.95" fill="none" stroke="#c8c8c8" stroke-width="1.1"/><rect x="376.5" y="66" width="1" height="17.5" fill="#696969"/><path d="M381.75 73.25L385.25 76.75L388.75 73.25" fill="none" stroke="#c8c8c8" stroke-width="1.2"/><rect x="400" y="51" width="20" height="21" rx="3" fill="#333"/><rect x="406.5" y="55" width="5" height="7.5" rx="2.5" fill="none" stroke="#c8c8c8" stroke-width="1.2"/><rect x="408.5" y="60.5" width="5" height="7.5" rx="2.5" fill="none" stroke="#c8c8c8" stroke-width="1.2"/><path d="M430 53.5H440.5M430 53.5L437 45.5" stroke="#c8c8c8" stroke-width="1.3" fill="none"/><path d="M435 53.5A4.5 4.5 0 0 0 433.5 49.8" stroke="#c8c8c8" stroke-width="0.9" fill="none"/><path d="M433.5 70H440.5L437 79.5H430Z" fill="#c8c8c8"/><rect x="446.5" y="40.5" width="81" height="19" rx="2.5" fill="#434343" stroke="#696969" stroke-width="1"/><rect x="462.5" y="41" width="1" height="18" fill="#696969"/><path d="M451.3 45.8L454.5 43.0L457.7 45.8M451.3 53.2L454.5 56.0L457.7 53.2" fill="none" stroke="#c8c8c8" stroke-width="1.1"/><rect x="510" y="41" width="1" height="18" fill="#696969"/><path d="M515.5 48.5L519.0 52.0L522.5 48.5" fill="none" stroke="#c8c8c8" stroke-width="1.2"/><rect x="446.5" y="65.5" width="81" height="18.5" rx="2.5" fill="#434343" stroke="#696969" stroke-width="1"/><rect x="462.5" y="66" width="1" height="17.5" fill="#696969"/><path d="M451.3 70.55L454.5 67.75L457.7 70.55M451.3 77.95L454.5 80.75L457.7 77.95" fill="none" stroke="#c8c8c8" stroke-width="1.1"/><rect x="510" y="66" width="1" height="17.5" fill="#696969"/><path d="M515.5 73.25L519.0 76.75L522.5 73.25" fill="none" stroke="#c8c8c8" stroke-width="1.2"/><rect x="532" y="40" width="1" height="45" fill="#4c4c4c"/><path d="M543.20 50.30A6.3 6.3 0 0 1 555.06 47.34" fill="none" stroke="#c8c8c8" stroke-width="1.4"/><path d="M555.42 52.45A6.3 6.3 0 0 1 543.20 50.30" fill="none" stroke="#c8c8c8" stroke-width="1.1" stroke-dasharray="1.1 1.2"/><path d="M558.29 43.85L558.29 50.15L552.29 48.55Z" fill="#c8c8c8"/><g transform="translate(1149.6 0) scale(-1 1)"><path d="M568.50 50.30A6.3 6.3 0 0 1 580.36 47.34" fill="none" stroke="#c8c8c8" stroke-width="1.4"/><path d="M580.72 52.45A6.3 6.3 0 0 1 568.50 50.30" fill="none" stroke="#c8c8c8" stroke-width="1.1" stroke-dasharray="1.1 1.2"/><path d="M583.59 43.85L583.59 50.15L577.59 48.55Z" fill="#c8c8c8"/></g><path d="M541.5 68.5L547.5 74.5L541.5 80.5Z" fill="none" stroke="#c8c8c8" stroke-width="1"/><path d="M557 68.5L551 74.5L557 80.5Z" fill="#c8c8c8"/><path d="M549.3 67V82" stroke="#c8c8c8" stroke-width="0.9" stroke-dasharray="1 1"/><path d="M567.5 66.5H581L574.3 72Z" fill="none" stroke="#c8c8c8" stroke-width="1"/><path d="M567.5 83H581L574.3 77Z" fill="#c8c8c8"/><path d="M566 74.5H583" stroke="#c8c8c8" stroke-width="0.9" stroke-dasharray="1 1"/><path d="M593.8 52.5V49.8H596.5M613.5 49.8H616.2V52.5M616.2 70.5V73.2H613.5M596.5 73.2H593.8V70.5" fill="none" stroke="#c8c8c8" stroke-width="1.6"/><rect x="623.5" y="40" width="1" height="45" fill="#4c4c4c"/><rect x="639.25" y="47.5" width="2.5" height="2.8" fill="none" stroke="#8f8f8f" stroke-width="0.8"/><path d="M640.5 50.3V52M636.0 54.2V52H645.0V54.2M640.5 52V54.2" fill="none" stroke="#8f8f8f" stroke-width="0.8"/><rect x="634.75" y="54.2" width="2.5" height="2.5" fill="none" stroke="#8f8f8f" stroke-width="0.8"/><rect x="639.25" y="54.2" width="2.5" height="2.5" fill="none" stroke="#8f8f8f" stroke-width="0.8"/><rect x="643.75" y="54.2" width="2.5" height="2.5" fill="none" stroke="#8f8f8f" stroke-width="0.8"/><path d="M637.5 45.5L640.5 42.5L643.5 45.5Z" fill="#8f8f8f"/><rect x="639.25" y="67.5" width="2.5" height="2.8" fill="none" stroke="#8f8f8f" stroke-width="0.8"/><path d="M640.5 70.3V72M636.0 74.2V72H645.0V74.2M640.5 72V74.2" fill="none" stroke="#8f8f8f" stroke-width="0.8"/><rect x="634.75" y="74.2" width="2.5" height="2.5" fill="none" stroke="#8f8f8f" stroke-width="0.8"/><rect x="639.25" y="74.2" width="2.5" height="2.5" fill="none" stroke="#8f8f8f" stroke-width="0.8"/><rect x="643.75" y="74.2" width="2.5" height="2.5" fill="none" stroke="#8f8f8f" stroke-width="0.8"/><path d="M637.5 79L640.5 82L643.5 79Z" fill="#8f8f8f"/><rect x="667.25" y="45.0" width="2.5" height="2.8" fill="none" stroke="#8f8f8f" stroke-width="0.8"/><path d="M668.5 47.8V49.5M664.0 51.7V49.5H673.0V51.7M668.5 49.5V51.7" fill="none" stroke="#8f8f8f" stroke-width="0.8"/><rect x="662.75" y="51.7" width="2.5" height="2.5" fill="none" stroke="#8f8f8f" stroke-width="0.8"/><rect x="667.25" y="51.7" width="2.5" height="2.5" fill="none" stroke="#8f8f8f" stroke-width="0.8"/><rect x="671.75" y="51.7" width="2.5" height="2.5" fill="none" stroke="#8f8f8f" stroke-width="0.8"/><path d="M661.5 47L658 49.5L661.5 52Z" fill="#8f8f8f"/><rect x="662.25" y="70.5" width="2.5" height="2.8" fill="none" stroke="#8f8f8f" stroke-width="0.8"/><path d="M663.5 73.3V75M659.0 77.2V75H668.0V77.2M663.5 75V77.2" fill="none" stroke="#8f8f8f" stroke-width="0.8"/><rect x="657.75" y="77.2" width="2.5" height="2.5" fill="none" stroke="#8f8f8f" stroke-width="0.8"/><rect x="662.25" y="77.2" width="2.5" height="2.5" fill="none" stroke="#8f8f8f" stroke-width="0.8"/><rect x="666.75" y="77.2" width="2.5" height="2.5" fill="none" stroke="#8f8f8f" stroke-width="0.8"/><path d="M671 72.5L675 75L671 77.5Z" fill="#8f8f8f"/><rect x="682" y="40" width="1" height="45" fill="#4c4c4c"/><rect x="688" y="41" width="19" height="18.5" fill="#fff"/><path d="M688.5 59L706.5 41.5" stroke="#e01010" stroke-width="1.6"/><rect x="711" y="40.5" width="15" height="19.5" rx="2.5" fill="#444" stroke="#5e5e5e" stroke-width="1"/><path d="M716.5 46.5L720.5 50.3L716.5 54" fill="none" stroke="#c8c8c8" stroke-width="1.2"/><rect x="688" y="65.5" width="19" height="18.5" fill="#fff"/><rect x="692.5" y="70" width="10" height="9.5" fill="#444"/><path d="M689 83L706 66" stroke="#e01010" stroke-width="1.6"/><rect x="711" y="65" width="15" height="19.5" rx="2.5" fill="#444" stroke="#5e5e5e" stroke-width="1"/><path d="M716.5 71L720.5 74.8L716.5 78.5" fill="none" stroke="#c8c8c8" stroke-width="1.2"/><rect x="731.5" y="40" width="1" height="45" fill="#4c4c4c"/><rect x="738.0" y="40.5" width="80.5" height="19" rx="2.5" fill="#434343" stroke="#696969" stroke-width="1"/><rect x="754.0" y="41" width="1" height="18" fill="#696969"/><path d="M742.8 45.8L746.0 43.0L749.2 45.8M742.8 53.2L746.0 56.0L749.2 53.2" fill="none" stroke="#c8c8c8" stroke-width="1.1"/><rect x="801.5" y="41" width="1" height="18" fill="#696969"/><path d="M806.75 48.5L810.25 52.0L813.75 48.5" fill="none" stroke="#c8c8c8" stroke-width="1.2"/><rect x="738.0" y="65.5" width="80.5" height="18.5" rx="2.5" fill="#434343" stroke="#696969" stroke-width="1"/><rect x="738.5" y="66" width="63.0" height="17.5" fill="#e3e3e3"/><rect x="801.5" y="66" width="1" height="17.5" fill="#696969"/><path d="M806.75 73.25L810.25 76.75L813.75 73.25" fill="none" stroke="#c8c8c8" stroke-width="1.2"/><rect x="741" y="71" width="51.5" height="7.5" fill="#000"/><rect x="824" y="40" width="1" height="45" fill="#4c4c4c"/><rect x="833" y="43" width="11.5" height="11.5" fill="#c8c8c8"/><path d="M836.8 44.3H840.7A2.5 2.5 0 0 0 843.2 46.8V50.7A2.5 2.5 0 0 0 840.7 53.2H836.8A2.5 2.5 0 0 0 834.3 50.7V46.8A2.5 2.5 0 0 0 836.8 44.3Z" fill="#535353"/><path d="M845.5 55.5H848.5L847 57.3Z" fill="#c8c8c8"/><rect x="862.5" y="44.5" width="10" height="9.5" fill="none" stroke="#c8c8c8" stroke-width="1.3"/><rect x="862" y="54.5" width="11" height="2" fill="#7a7a7a"/><text x="889" y="54.5" font-family="Liberation Sans" font-style="italic" font-size="13.5" fill="#c8c8c8">fx</text><path d="M902 56L904.5 56L903.25 57.5Z" fill="#c8c8c8"/><rect x="832.5" y="69.5" width="10" height="10.5" fill="none" stroke="#c8c8c8" stroke-width="1"/><rect x="833.5" y="70.5" width="2" height="2" fill="#777"/><rect x="833.5" y="74.5" width="2" height="2" fill="#777"/><rect x="835.5" y="72.5" width="2" height="2" fill="#777"/><rect x="835.5" y="76.5" width="2" height="2" fill="#777"/><rect x="837.5" y="70.5" width="2" height="2" fill="#777"/><rect x="837.5" y="74.5" width="2" height="2" fill="#777"/><rect x="839.5" y="72.5" width="2" height="2" fill="#777"/><rect x="839.5" y="76.5" width="2" height="2" fill="#777"/><rect x="849.5" y="65.5" width="64.5" height="18.5" rx="2.5" fill="#434343" stroke="#696969" stroke-width="1"/><rect x="897.5" y="66" width="1" height="17.5" fill="#696969"/><path d="M904 71L907.7 74.8L904 78.5" fill="none" stroke="#c8c8c8" stroke-width="1.2"/><rect x="919.5" y="40" width="1" height="45" fill="#4c4c4c"/><rect x="926" y="39" width="21" height="21" rx="3" fill="#2f2f2f"/><path d="M929.5 43H943M929.5 55H943M929.5 46H933M939.5 46H943M929.5 49H933M939.5 49H943M929.5 52H933M939.5 52H943" stroke="#e8e8e8" stroke-width="1"/><rect x="932.5" y="45" width="7.5" height="8" fill="#e8e8e8"/><path d="M933 47.5H939.5M933 50.5H939.5" stroke="#2f2f2f" stroke-width="0.8"/><path d="M955.5 43H969M955.5 55H969M955.5 46H958M966.5 46H969M955.5 49H958M966.5 49H969M955.5 52H958M966.5 52H969" stroke="#c8c8c8" stroke-width="1"/><rect x="959.5" y="45" width="5.5" height="8" fill="none" stroke="#c8c8c8" stroke-width="1"/><path d="M929.5 67.5H937M929.5 70.5H933M929.5 73.5H933M929.5 76.5H933M929.5 79.5H943M940 76.5H943" stroke="#c8c8c8" stroke-width="1"/><circle cx="936" cy="74" r="4" fill="#c8c8c8"/><circle cx="941.3" cy="70.2" r="3.2" fill="#3d8ef0"/><path d="M955.5 67.5H969M955.5 80.5H969M955.5 77.5H969" stroke="#c8c8c8" stroke-width="1"/><rect x="959" y="70" width="7" height="5" fill="#c8c8c8"/><rect x="977.5" y="40" width="1" height="45" fill="#4c4c4c"/><rect x="985" y="44" width="4" height="4" fill="#3f86ea"/><rect x="995.5" y="44" width="4" height="4" fill="#3f86ea"/><rect x="985" y="52.7" width="4" height="4" fill="#3f86ea"/><rect x="995.5" y="52.7" width="4" height="4" fill="#3f86ea"/><path d="M989 46H995.5M989 54.7H995.5M987 48V52.7M997.5 48V52.7" stroke="#9fb9dc" stroke-width="1"/><rect x="1004.0" y="40.5" width="80.5" height="19" rx="2.5" fill="#434343" stroke="#696969" stroke-width="1"/><rect x="1020.0" y="41" width="1" height="18" fill="#696969"/><path d="M1008.8 45.8L1012.0 43.0L1015.2 45.8M1008.8 53.2L1012.0 56.0L1015.2 53.2" fill="none" stroke="#c8c8c8" stroke-width="1.1"/><rect x="1004.0" y="65.5" width="80.5" height="18.5" rx="2.5" fill="#434343" stroke="#696969" stroke-width="1"/><rect x="1004.5" y="66" width="63.0" height="17.5" fill="#e3e3e3"/><rect x="1067.5" y="66" width="1" height="17.5" fill="#696969"/><path d="M1072.75 73.25L1076.25 76.75L1079.75 73.25" fill="none" stroke="#c8c8c8" stroke-width="1.2"/><path d="M1006.5 68.5H1060.5V81.5" fill="none" stroke="#111" stroke-width="1.4"/><rect x="1090.5" y="40" width="1" height="45" fill="#4c4c4c"/><rect x="1100" y="43" width="14" height="9.5" fill="#8a8a8a" stroke="#909090" stroke-width="1"/><circle cx="1100" cy="43" r="1.3" fill="#535353" stroke="#909090" stroke-width="0.9"/><circle cx="1114" cy="43" r="1.3" fill="#535353" stroke="#909090" stroke-width="0.9"/><circle cx="1100" cy="52.5" r="1.3" fill="#535353" stroke="#909090" stroke-width="0.9"/><circle cx="1114" cy="52.5" r="1.3" fill="#535353" stroke="#909090" stroke-width="0.9"/><path d="M1100 53.5V56.5H1114V53.5" fill="none" stroke="#909090" stroke-width="0.9" stroke-dasharray="1.2 1"/><rect x="1125.5" y="43" width="13.5" height="12.5" fill="none" stroke="#909090" stroke-width="1"/><rect x="1126" y="43.5" width="9" height="11.5" fill="#8a8a8a"/><circle cx="1125.5" cy="43" r="1.3" fill="#535353" stroke="#909090" stroke-width="0.9"/><circle cx="1139" cy="43" r="1.3" fill="#535353" stroke="#909090" stroke-width="0.9"/><circle cx="1125.5" cy="55.5" r="1.3" fill="#535353" stroke="#909090" stroke-width="0.9"/><circle cx="1139" cy="55.5" r="1.3" fill="#535353" stroke="#909090" stroke-width="0.9"/><rect x="1148.5" y="40" width="1" height="45" fill="#4c4c4c"/><rect x="1158.5" y="43" width="13.5" height="12.5" fill="none" stroke="#909090" stroke-width="1"/><rect x="1159" y="43.5" width="5.5" height="5.5" fill="#8a8a8a"/><path d="M1165 49.5H1168M1164 51V53" stroke="#909090" stroke-width="0.8"/><circle cx="1158.5" cy="43" r="1.3" fill="#535353" stroke="#909090" stroke-width="0.9"/><circle cx="1172" cy="43" r="1.3" fill="#535353" stroke="#909090" stroke-width="0.9"/><circle cx="1158.5" cy="55.5" r="1.3" fill="#535353" stroke="#909090" stroke-width="0.9"/><circle cx="1172" cy="55.5" r="1.3" fill="#535353" stroke="#909090" stroke-width="0.9"/><rect x="1183.5" y="43" width="13.5" height="12.5" fill="none" stroke="#909090" stroke-width="1"/><rect x="1184" y="43.5" width="6" height="6" fill="#8a8a8a"/><path d="M1192 48H1195M1189.5 51V55" stroke="#909090" stroke-width="0.8"/><circle cx="1183.5" cy="43" r="1.3" fill="#535353" stroke="#909090" stroke-width="0.9"/><circle cx="1197" cy="43" r="1.3" fill="#535353" stroke="#909090" stroke-width="0.9"/><circle cx="1183.5" cy="55.5" r="1.3" fill="#535353" stroke="#909090" stroke-width="0.9"/><circle cx="1197" cy="55.5" r="1.3" fill="#535353" stroke="#909090" stroke-width="0.9"/><rect x="1209" y="43" width="14" height="12.5" fill="none" stroke="#909090" stroke-width="1"/><rect x="1213" y="46" width="6.5" height="6.5" fill="#8a8a8a"/><circle cx="1209" cy="43" r="1.3" fill="#535353" stroke="#909090" stroke-width="0.9"/><circle cx="1223" cy="43" r="1.3" fill="#535353" stroke="#909090" stroke-width="0.9"/><circle cx="1209" cy="55.5" r="1.3" fill="#535353" stroke="#909090" stroke-width="0.9"/><circle cx="1223" cy="55.5" r="1.3" fill="#535353" stroke="#909090" stroke-width="0.9"/><rect x="1099.5" y="68.5" width="11" height="11" rx="1.5" fill="none" stroke="#a8a8a8" stroke-width="1"/><rect x="1209" y="67.5" width="14" height="14" fill="none" stroke="#909090" stroke-width="0.9" stroke-dasharray="1.2 1.2"/><rect x="1212" y="70.5" width="8" height="8" fill="#8a8a8a"/><circle cx="1212" cy="70.5" r="1.3" fill="#535353" stroke="#909090" stroke-width="0.9"/><circle cx="1220" cy="70.5" r="1.3" fill="#535353" stroke="#909090" stroke-width="0.9"/><circle cx="1212" cy="78.5" r="1.3" fill="#535353" stroke="#909090" stroke-width="0.9"/><circle cx="1220" cy="78.5" r="1.3" fill="#535353" stroke="#909090" stroke-width="0.9"/><rect x="1232.5" y="40" width="1" height="45" fill="#4c4c4c"/><rect x="1241" y="41" width="1.3" height="17" fill="#c8c8c8"/><rect x="1243.5" y="43" width="6.5" height="5" fill="#c8c8c8"/><rect x="1243.5" y="50.5" width="12.5" height="5" fill="#c8c8c8"/><rect x="1273.6" y="41" width="1.3" height="17" fill="#c8c8c8"/><rect x="1271" y="43" width="6.5" height="5" fill="#c8c8c8"/><rect x="1268" y="50.5" width="12.5" height="5" fill="#c8c8c8"/><rect x="1307" y="41" width="1.3" height="17" fill="#c8c8c8"/><rect x="1299" y="43" width="6.5" height="5" fill="#c8c8c8"/><rect x="1293" y="50.5" width="12.5" height="5" fill="#c8c8c8"/><rect x="1319.5" y="43.5" width="12" height="12" fill="none" stroke="#c8c8c8" stroke-width="1"/><circle cx="1319.5" cy="43.5" r="1" fill="#c8c8c8"/><circle cx="1319.5" cy="55.5" r="1" fill="#c8c8c8"/><circle cx="1331.5" cy="43.5" r="1" fill="#c8c8c8"/><circle cx="1331.5" cy="55.5" r="1" fill="#c8c8c8"/><path d="M1333.5 54.5H1337.5L1335.5 57Z" fill="#c8c8c8"/><rect x="1241" y="67" width="15" height="1.3" fill="#c8c8c8"/><rect x="1243" y="69" width="5" height="13" fill="#c8c8c8"/><rect x="1250.5" y="69" width="5" height="7" fill="#c8c8c8"/><rect x="1266" y="74" width="17" height="1.3" fill="#c8c8c8"/><rect x="1268.5" y="68" width="5" height="13" fill="#c8c8c8"/><rect x="1276" y="71" width="5" height="7" fill="#c8c8c8"/><rect x="1291.5" y="81" width="17" height="1.3" fill="#c8c8c8"/><rect x="1293.5" y="68" width="5" height="12.5" fill="#c8c8c8"/><rect x="1301" y="74" width="5" height="6.5" fill="#c8c8c8"/><path d="M1536 53.5L1530 62H1533.8L1529.5 69L1538 59.5H1534L1537.5 53.5Z" fill="#c8c8c8"/><rect x="1547" y="38" width="1" height="48" fill="#4b4b4b"/><circle cx="1561.7" cy="49.6" r="3.6" fill="none" stroke="#c8c8c8" stroke-width="2.4" stroke-dasharray="1.6 0.8"/><circle cx="1561.7" cy="49.6" r="3" fill="none" stroke="#c8c8c8" stroke-width="1.5"/><path d="M1556 71H1568M1556 74.2H1568M1556 77.4H1568" stroke="#c8c8c8" stroke-width="1"/></svg><div class="a t" style="left:54.50px;top:45.41px;font-size:10.5px;line-height:10.5px;font-weight:400;color:#dedede;-webkit-text-stroke:0.2px #dedede">X:</div><div class="a t" style="left:54.50px;top:69.61px;font-size:10.5px;line-height:10.5px;font-weight:400;color:#dedede;-webkit-text-stroke:0.2px #dedede">Y:</div><div class="a t" style="left:163.50px;top:45.41px;font-size:10.5px;line-height:10.5px;font-weight:400;color:#dedede;-webkit-text-stroke:0.2px #dedede">B:</div><div class="a t" style="left:160.50px;top:69.61px;font-size:10.5px;line-height:10.5px;font-weight:400;color:#dedede;-webkit-text-stroke:0.2px #dedede">H:</div><div class="a t" style="left:87.00px;top:45.95px;font-size:10.1px;line-height:10.1px;font-weight:400;color:#e8e8e8;-webkit-text-stroke:0.4px #e8e8e8;letter-spacing:0.25px">21,5 mm</div><div class="a t" style="left:87.00px;top:70.55px;font-size:10.1px;line-height:10.1px;font-weight:400;color:#e8e8e8;-webkit-text-stroke:0.4px #e8e8e8;letter-spacing:0.25px">44 mm</div><div class="a t" style="left:193.50px;top:45.95px;font-size:10.1px;line-height:10.1px;font-weight:400;color:#e8e8e8;-webkit-text-stroke:0.4px #e8e8e8;letter-spacing:0.25px">111,5 mm</div><div class="a t" style="left:193.50px;top:70.55px;font-size:10.1px;line-height:10.1px;font-weight:400;color:#e8e8e8;-webkit-text-stroke:0.4px #e8e8e8;letter-spacing:0.25px">95,5 mm</div><div class="a t" style="left:332.00px;top:45.95px;font-size:10.1px;line-height:10.1px;font-weight:400;color:#e8e8e8;-webkit-text-stroke:0.4px #e8e8e8;letter-spacing:0.25px">100 %</div><div class="a t" style="left:332.00px;top:70.55px;font-size:10.1px;line-height:10.1px;font-weight:400;color:#e8e8e8;-webkit-text-stroke:0.4px #e8e8e8;letter-spacing:0.25px">100 %</div><div class="a t" style="left:465.50px;top:45.95px;font-size:10.1px;line-height:10.1px;font-weight:400;color:#e8e8e8;-webkit-text-stroke:0.4px #e8e8e8;letter-spacing:0.25px">0°</div><div class="a t" style="left:465.50px;top:70.55px;font-size:10.1px;line-height:10.1px;font-weight:400;color:#e8e8e8;-webkit-text-stroke:0.4px #e8e8e8;letter-spacing:0.25px">0°</div><div class="a t" style="left:756.50px;top:45.95px;font-size:10.1px;line-height:10.1px;font-weight:400;color:#e8e8e8;-webkit-text-stroke:0.4px #e8e8e8;letter-spacing:0.25px">0 Pt</div><div class="a t" style="left:853.00px;top:70.55px;font-size:10.1px;line-height:10.1px;font-weight:400;color:#e8e8e8;-webkit-text-stroke:0.4px #e8e8e8;letter-spacing:0.25px">100 %</div><div class="a t" style="left:1024.00px;top:45.95px;font-size:10.1px;line-height:10.1px;font-weight:400;color:#e8e8e8;-webkit-text-stroke:0.4px #e8e8e8;letter-spacing:0.25px">4,233 mm</div><div class="a t" style="left:1116.50px;top:70.00px;font-size:9.8px;line-height:9.8px;font-weight:400;color:#e8e8e8;-webkit-text-stroke:0.4px #e8e8e8;letter-spacing:0.3px">Automatisch ein...</div><div class="a t" style="left:598.50px;top:50.53px;font-size:23px;line-height:23px;font-weight:400;color:#e8e8e8;font-family:'Liberation Serif'">P</div></body></html>
